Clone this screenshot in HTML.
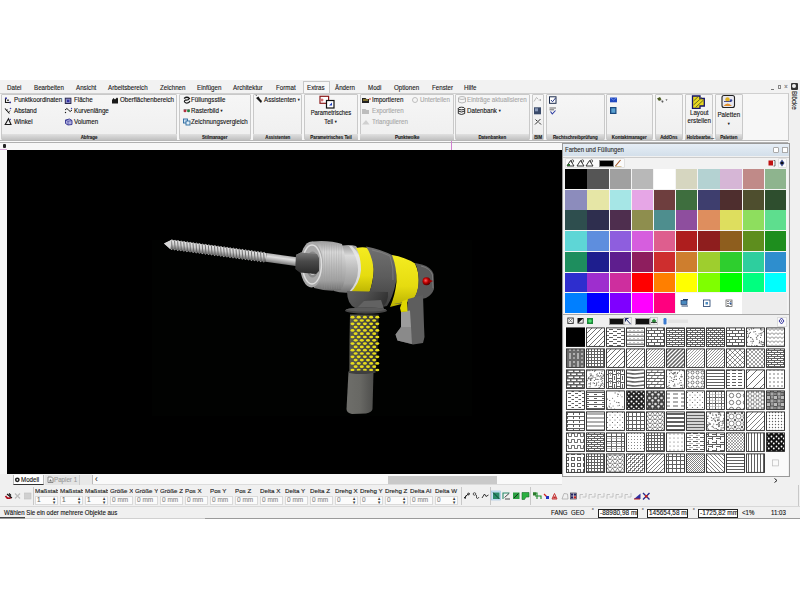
<!DOCTYPE html><html><head><meta charset="utf-8"><style>
html,body{margin:0;padding:0;width:800px;height:600px;overflow:hidden;background:#fff;}
#root{position:relative;width:800px;height:600px;overflow:hidden;font-family:"Liberation Sans",sans-serif;}
.t{position:absolute;white-space:nowrap;line-height:1.2;-webkit-text-stroke:0.12px currentColor;}
.b{position:absolute;box-sizing:border-box;}
svg{position:absolute;}
</style></head><body><div id="root">
<div class="b" style="left:0px;top:80px;width:800px;height:439px;background:#f0f0f0;"></div>
<div class="b" style="left:0px;top:80px;width:800px;height:13px;background:#f2f2f2;"></div>
<div class="b" style="left:302.5px;top:81px;width:27px;height:12.5px;background:#f7f7f7;border:1px solid #c8c8c8;border-bottom:none;"></div>
<div class="t" style="left:6.75px;top:83.80px;font-size:7.01px;transform:scaleX(0.885);transform-origin:0 0;color:#1a1a1a;font-weight:normal;">Datei</div>
<div class="t" style="left:33.75px;top:83.80px;font-size:7.01px;transform:scaleX(0.885);transform-origin:0 0;color:#1a1a1a;font-weight:normal;">Bearbeiten</div>
<div class="t" style="left:75.75px;top:83.80px;font-size:7.01px;transform:scaleX(0.885);transform-origin:0 0;color:#1a1a1a;font-weight:normal;">Ansicht</div>
<div class="t" style="left:108px;top:83.80px;font-size:7.01px;transform:scaleX(0.885);transform-origin:0 0;color:#1a1a1a;font-weight:normal;">Arbeitsbereich</div>
<div class="t" style="left:160px;top:83.80px;font-size:7.01px;transform:scaleX(0.885);transform-origin:0 0;color:#1a1a1a;font-weight:normal;">Zeichnen</div>
<div class="t" style="left:197px;top:83.80px;font-size:7.01px;transform:scaleX(0.885);transform-origin:0 0;color:#1a1a1a;font-weight:normal;">Einfügen</div>
<div class="t" style="left:233px;top:83.80px;font-size:7.01px;transform:scaleX(0.885);transform-origin:0 0;color:#1a1a1a;font-weight:normal;">Architektur</div>
<div class="t" style="left:276px;top:83.80px;font-size:7.01px;transform:scaleX(0.885);transform-origin:0 0;color:#1a1a1a;font-weight:normal;">Format</div>
<div class="t" style="left:307px;top:83.80px;font-size:7.01px;transform:scaleX(0.885);transform-origin:0 0;color:#1a1a1a;font-weight:normal;">Extras</div>
<div class="t" style="left:335px;top:83.80px;font-size:7.01px;transform:scaleX(0.885);transform-origin:0 0;color:#1a1a1a;font-weight:normal;">Ändern</div>
<div class="t" style="left:367.5px;top:83.80px;font-size:7.01px;transform:scaleX(0.885);transform-origin:0 0;color:#1a1a1a;font-weight:normal;">Modi</div>
<div class="t" style="left:394px;top:83.80px;font-size:7.01px;transform:scaleX(0.885);transform-origin:0 0;color:#1a1a1a;font-weight:normal;">Optionen</div>
<div class="t" style="left:432px;top:83.80px;font-size:7.01px;transform:scaleX(0.885);transform-origin:0 0;color:#1a1a1a;font-weight:normal;">Fenster</div>
<div class="t" style="left:464px;top:83.80px;font-size:7.01px;transform:scaleX(0.885);transform-origin:0 0;color:#1a1a1a;font-weight:normal;">Hilfe</div>
<div class="b" style="left:770.5px;top:88.5px;width:3px;height:0.8px;background:#777;"></div>
<div class="b" style="left:777.5px;top:85px;width:3.5px;height:3.5px;border:0.8px solid #888;"></div>
<div class="t" style="left:784.3px;top:82.59px;font-size:7.34px;transform:scaleX(0.885);transform-origin:0 0;color:#777;font-weight:normal;">×</div>
<div class="b" style="left:0px;top:92.5px;width:788.5px;height:48.5px;background:#f7f7f7;border-top:1px solid #d0d0d0;border-bottom:1px solid #b8b8b8;border-right:1px solid #c8c8c8;"></div>
<div class="b" style="left:1px;top:94px;width:176px;height:46px;background:linear-gradient(#f6f6f6,#efefef);border:1px solid #c9c9c9;border-radius:1px;"></div>
<div class="b" style="left:1.5px;top:133.5px;width:175px;height:6.3px;background:linear-gradient(#e0e0e0,#c0c0c0);"></div>
<div class="t" style="left:1px;width:176px;text-align:center;top:134.1px;font-size:5.0px;transform:scaleX(0.885);transform-origin:50% 0;color:#1a1a1a;font-weight:bold;">Abfrage</div>
<div class="b" style="left:179px;top:94px;width:71.5px;height:46px;background:linear-gradient(#f6f6f6,#efefef);border:1px solid #c9c9c9;border-radius:1px;"></div>
<div class="b" style="left:179.5px;top:133.5px;width:70.5px;height:6.3px;background:linear-gradient(#e0e0e0,#c0c0c0);"></div>
<div class="t" style="left:179px;width:71.5px;text-align:center;top:134.1px;font-size:5.0px;transform:scaleX(0.885);transform-origin:50% 0;color:#1a1a1a;font-weight:bold;">Stilmanager</div>
<div class="b" style="left:252.5px;top:94px;width:49.5px;height:46px;background:linear-gradient(#f6f6f6,#efefef);border:1px solid #c9c9c9;border-radius:1px;"></div>
<div class="b" style="left:253.0px;top:133.5px;width:48.5px;height:6.3px;background:linear-gradient(#e0e0e0,#c0c0c0);"></div>
<div class="t" style="left:252.5px;width:49.5px;text-align:center;top:134.1px;font-size:5.0px;transform:scaleX(0.885);transform-origin:50% 0;color:#1a1a1a;font-weight:bold;">Assistenten</div>
<div class="b" style="left:304px;top:94px;width:54px;height:46px;background:linear-gradient(#f6f6f6,#efefef);border:1px solid #c9c9c9;border-radius:1px;"></div>
<div class="b" style="left:304.5px;top:133.5px;width:53px;height:6.3px;background:linear-gradient(#e0e0e0,#c0c0c0);"></div>
<div class="t" style="left:304px;width:54px;text-align:center;top:134.1px;font-size:5.0px;transform:scaleX(0.885);transform-origin:50% 0;color:#1a1a1a;font-weight:bold;">Parametrisches Teil</div>
<div class="b" style="left:359.5px;top:94px;width:94.5px;height:46px;background:linear-gradient(#f6f6f6,#efefef);border:1px solid #c9c9c9;border-radius:1px;"></div>
<div class="b" style="left:360.0px;top:133.5px;width:93.5px;height:6.3px;background:linear-gradient(#e0e0e0,#c0c0c0);"></div>
<div class="t" style="left:359.5px;width:94.5px;text-align:center;top:134.1px;font-size:5.0px;transform:scaleX(0.885);transform-origin:50% 0;color:#1a1a1a;font-weight:bold;">Punktwolke</div>
<div class="b" style="left:455px;top:94px;width:74.60000000000002px;height:46px;background:linear-gradient(#f6f6f6,#efefef);border:1px solid #c9c9c9;border-radius:1px;"></div>
<div class="b" style="left:455.5px;top:133.5px;width:73.60000000000002px;height:6.3px;background:linear-gradient(#e0e0e0,#c0c0c0);"></div>
<div class="t" style="left:455px;width:74.60000000000002px;text-align:center;top:134.1px;font-size:5.0px;transform:scaleX(0.885);transform-origin:50% 0;color:#1a1a1a;font-weight:bold;">Datenbanken</div>
<div class="b" style="left:531.6px;top:94px;width:12.399999999999977px;height:46px;background:linear-gradient(#f6f6f6,#efefef);border:1px solid #c9c9c9;border-radius:1px;"></div>
<div class="b" style="left:532.1px;top:133.5px;width:11.399999999999977px;height:6.3px;background:linear-gradient(#e0e0e0,#c0c0c0);"></div>
<div class="t" style="left:531.6px;width:12.399999999999977px;text-align:center;top:134.1px;font-size:5.0px;transform:scaleX(0.885);transform-origin:50% 0;color:#1a1a1a;font-weight:bold;">BIM</div>
<div class="b" style="left:546px;top:94px;width:58.5px;height:46px;background:linear-gradient(#f6f6f6,#efefef);border:1px solid #c9c9c9;border-radius:1px;"></div>
<div class="b" style="left:546.5px;top:133.5px;width:57.5px;height:6.3px;background:linear-gradient(#e0e0e0,#c0c0c0);"></div>
<div class="t" style="left:546px;width:58.5px;text-align:center;top:134.1px;font-size:5.0px;transform:scaleX(0.885);transform-origin:50% 0;color:#1a1a1a;font-weight:bold;">Rechtschreibprüfung</div>
<div class="b" style="left:606px;top:94px;width:46.5px;height:46px;background:linear-gradient(#f6f6f6,#efefef);border:1px solid #c9c9c9;border-radius:1px;"></div>
<div class="b" style="left:606.5px;top:133.5px;width:45.5px;height:6.3px;background:linear-gradient(#e0e0e0,#c0c0c0);"></div>
<div class="t" style="left:606px;width:46.5px;text-align:center;top:134.1px;font-size:5.0px;transform:scaleX(0.885);transform-origin:50% 0;color:#1a1a1a;font-weight:bold;">Kontaktmanager</div>
<div class="b" style="left:655px;top:94px;width:27.5px;height:46px;background:linear-gradient(#f6f6f6,#efefef);border:1px solid #c9c9c9;border-radius:1px;"></div>
<div class="b" style="left:655.5px;top:133.5px;width:26.5px;height:6.3px;background:linear-gradient(#e0e0e0,#c0c0c0);"></div>
<div class="t" style="left:655px;width:27.5px;text-align:center;top:134.1px;font-size:5.0px;transform:scaleX(0.885);transform-origin:50% 0;color:#1a1a1a;font-weight:bold;">AddOns</div>
<div class="b" style="left:684.5px;top:94px;width:28.5px;height:46px;background:linear-gradient(#f6f6f6,#efefef);border:1px solid #c9c9c9;border-radius:1px;"></div>
<div class="b" style="left:685.0px;top:133.5px;width:27.5px;height:6.3px;background:linear-gradient(#e0e0e0,#c0c0c0);"></div>
<div class="t" style="left:684.5px;width:28.5px;text-align:center;top:134.1px;font-size:5.0px;transform:scaleX(0.885);transform-origin:50% 0;color:#1a1a1a;font-weight:bold;">Holzbearbe...</div>
<div class="b" style="left:715px;top:94px;width:27.5px;height:46px;background:linear-gradient(#f6f6f6,#efefef);border:1px solid #c9c9c9;border-radius:1px;"></div>
<div class="b" style="left:715.5px;top:133.5px;width:26.5px;height:6.3px;background:linear-gradient(#e0e0e0,#c0c0c0);"></div>
<div class="t" style="left:715px;width:27.5px;text-align:center;top:134.1px;font-size:5.0px;transform:scaleX(0.885);transform-origin:50% 0;color:#1a1a1a;font-weight:bold;">Paletten</div>
<div class="b" style="left:0px;top:141px;width:788px;height:1.5px;background:#fafafa;"></div>
<div class="b" style="left:0px;top:142px;width:788px;height:1px;background:#b0b0b0;"></div>
<div class="t" style="left:13.7px;top:95.80px;font-size:7.01px;transform:scaleX(0.885);transform-origin:0 0;color:#111;font-weight:normal;">Punktkoordinaten</div>
<div class="t" style="left:13.7px;top:106.80px;font-size:7.01px;transform:scaleX(0.885);transform-origin:0 0;color:#111;font-weight:normal;">Abstand</div>
<div class="t" style="left:13.7px;top:118.30px;font-size:7.01px;transform:scaleX(0.885);transform-origin:0 0;color:#111;font-weight:normal;">Winkel</div>
<div class="t" style="left:73.75px;top:95.80px;font-size:7.01px;transform:scaleX(0.885);transform-origin:0 0;color:#111;font-weight:normal;">Fläche</div>
<div class="t" style="left:73.75px;top:106.80px;font-size:7.01px;transform:scaleX(0.885);transform-origin:0 0;color:#111;font-weight:normal;">Kurvenlänge</div>
<div class="t" style="left:73.75px;top:118.30px;font-size:7.01px;transform:scaleX(0.885);transform-origin:0 0;color:#111;font-weight:normal;">Volumen</div>
<div class="t" style="left:120px;top:95.80px;font-size:7.01px;transform:scaleX(0.885);transform-origin:0 0;color:#111;font-weight:normal;">Oberflächenbereich</div>
<div class="t" style="left:191px;top:95.80px;font-size:7.01px;transform:scaleX(0.885);transform-origin:0 0;color:#111;font-weight:normal;">Füllungsstile</div>
<div class="t" style="left:191px;top:106.60px;font-size:7.01px;transform:scaleX(0.885);transform-origin:0 0;color:#111;font-weight:normal;">Rasterbild<span style='font-size:4px;vertical-align:1px'> ▼</span></div>
<div class="t" style="left:191px;top:118.10px;font-size:7.01px;transform:scaleX(0.885);transform-origin:0 0;color:#111;font-weight:normal;">Zeichnungsvergleich</div>
<div class="t" style="left:264px;top:95.80px;font-size:7.01px;transform:scaleX(0.885);transform-origin:0 0;color:#111;font-weight:normal;">Assistenten<span style='font-size:4px;vertical-align:1px'> ▼</span></div>
<div class="t" style="left:371.6px;top:95.80px;font-size:7.01px;transform:scaleX(0.885);transform-origin:0 0;color:#111;font-weight:normal;">Importieren</div>
<div class="t" style="left:467px;top:106.80px;font-size:7.01px;transform:scaleX(0.885);transform-origin:0 0;color:#111;font-weight:normal;">Datenbank<span style='font-size:4px;vertical-align:1px'> ▼</span></div>
<div class="t" style="left:419.6px;top:95.80px;font-size:7.01px;transform:scaleX(0.885);transform-origin:0 0;color:#a8a8a8;font-weight:normal;">Unterteilen</div>
<div class="t" style="left:371.6px;top:106.80px;font-size:7.01px;transform:scaleX(0.885);transform-origin:0 0;color:#a8a8a8;font-weight:normal;">Exportieren</div>
<div class="t" style="left:371.6px;top:118.30px;font-size:7.01px;transform:scaleX(0.885);transform-origin:0 0;color:#a8a8a8;font-weight:normal;">Triangulieren</div>
<div class="t" style="left:467px;top:95.80px;font-size:7.01px;transform:scaleX(0.885);transform-origin:0 0;color:#a8a8a8;font-weight:normal;">Einträge aktualisieren</div>
<div class="t" style="left:304px;width:54px;text-align:center;top:109px;font-size:6.6px;transform:scaleX(0.885);transform-origin:50% 0;color:#111;font-weight:normal;line-height:8.6px;">Parametrisches<br>Teil<span style='font-size:4px;vertical-align:1px'> ▼</span></div>
<div class="t" style="left:684.5px;width:28.5px;text-align:center;top:108.5px;font-size:7px;transform:scaleX(0.885);transform-origin:50% 0;color:#111;font-weight:normal;line-height:8.5px;">Layout<br>erstellen</div>
<div class="t" style="left:715px;width:27.5px;text-align:center;top:110.5px;font-size:7px;transform:scaleX(0.885);transform-origin:50% 0;color:#111;font-weight:normal;line-height:8.5px;">Paletten<br><span style='font-size:4px;'>▼</span></div>
<div class="b" style="left:0px;top:143px;width:562px;height:7px;background:#f7f7f7;"></div>
<div class="b" style="left:0px;top:143px;width:7px;height:331px;background:#f7f7f7;"></div>
<div class="b" style="left:451px;top:141px;width:1px;height:9px;background:#d080d0;"></div>
<div class="b" style="left:0px;top:149px;width:7px;height:1.2px;background:#d8a8d8;"></div>
<div class="b" style="left:2.5px;top:144px;width:3px;height:4px;background:#222;border-radius:1px;"></div>
<div class="b" style="left:7px;top:149.5px;width:555px;height:324px;background:#000;"></div>
<div class="b" style="left:152px;top:240px;width:320px;height:176px;background:#010201;"></div>
<svg style="left:0;top:0" width="800" height="600" viewBox="0 0 800 600">
<defs>
<linearGradient id="gScrew" x1="0" y1="0" x2="0" y2="1"><stop offset="0" stop-color="#e8e8e8"/><stop offset="0.45" stop-color="#cfcfcf"/><stop offset="1" stop-color="#6a6a6a"/></linearGradient>
<linearGradient id="gShaft" x1="0" y1="0" x2="0" y2="1"><stop offset="0" stop-color="#b0b0b0"/><stop offset="0.35" stop-color="#e0e0e0"/><stop offset="1" stop-color="#7a7a7a"/></linearGradient>
<linearGradient id="gHex" x1="0" y1="0" x2="0" y2="1"><stop offset="0" stop-color="#7a7a7a"/><stop offset="0.4" stop-color="#4a4a4a"/><stop offset="1" stop-color="#2a2a2a"/></linearGradient>
<linearGradient id="gChuck" x1="0" y1="0" x2="0" y2="1"><stop offset="0" stop-color="#9a9a9a"/><stop offset="0.22" stop-color="#dadada"/><stop offset="0.5" stop-color="#bcbcbc"/><stop offset="0.8" stop-color="#a0a0a0"/><stop offset="1" stop-color="#6e6e6e"/></linearGradient>
<linearGradient id="gChuck2" x1="0" y1="0" x2="1" y2="0"><stop offset="0" stop-color="#9a9a9a"/><stop offset="0.5" stop-color="#d8d8d8"/><stop offset="1" stop-color="#a0a0a0"/></linearGradient>
<linearGradient id="gYel" x1="0" y1="0" x2="0" y2="1"><stop offset="0" stop-color="#f4ec20"/><stop offset="0.6" stop-color="#e6dc10"/><stop offset="1" stop-color="#b8b000"/></linearGradient>
<linearGradient id="gGray" x1="0" y1="0" x2="0" y2="1"><stop offset="0" stop-color="#707070"/><stop offset="0.5" stop-color="#5c5c5c"/><stop offset="1" stop-color="#3e3e3e"/></linearGradient>
<linearGradient id="gGrip" x1="0" y1="0" x2="1" y2="0"><stop offset="0" stop-color="#6e6e6a"/><stop offset="0.5" stop-color="#686864"/><stop offset="1" stop-color="#4e4e4c"/></linearGradient>
<linearGradient id="gKnurl" x1="0" y1="0" x2="1" y2="0"><stop offset="0" stop-color="#5a5a50"/><stop offset="0.6" stop-color="#454540"/><stop offset="1" stop-color="#2a2a28"/></linearGradient>
<radialGradient id="gRed" cx="0.4" cy="0.4" r="0.6"><stop offset="0" stop-color="#ff6060"/><stop offset="0.5" stop-color="#c00000"/><stop offset="1" stop-color="#500000"/></radialGradient>
<linearGradient id="gBelly" x1="0" y1="0" x2="1" y2="0.3"><stop offset="0" stop-color="#5e5e5e"/><stop offset="0.5" stop-color="#4e4e4e"/><stop offset="1" stop-color="#333"/></linearGradient>
</defs>
<g transform="translate(164,243.5) rotate(7.746)">
<path d="M0 0 L7 -4.4 L103 -4.2 L103 4.4 L7 4.6 Z" fill="url(#gScrew)"/>
<path d="M6.00 -4.2 L7.40 -5.3 L8.80 -4.2 M7.00 4.4 L8.40 5.5 L9.40 4.4 M9.10 -4.2 L10.50 -5.3 L11.90 -4.2 M10.10 4.4 L11.50 5.5 L12.50 4.4 M12.20 -4.2 L13.60 -5.3 L15.00 -4.2 M13.20 4.4 L14.60 5.5 L15.60 4.4 M15.30 -4.2 L16.70 -5.3 L18.10 -4.2 M16.30 4.4 L17.70 5.5 L18.70 4.4 M18.40 -4.2 L19.80 -5.3 L21.20 -4.2 M19.40 4.4 L20.80 5.5 L21.80 4.4 M21.50 -4.2 L22.90 -5.3 L24.30 -4.2 M22.50 4.4 L23.90 5.5 L24.90 4.4 M24.60 -4.2 L26.00 -5.3 L27.40 -4.2 M25.60 4.4 L27.00 5.5 L28.00 4.4 M27.70 -4.2 L29.10 -5.3 L30.50 -4.2 M28.70 4.4 L30.10 5.5 L31.10 4.4 M30.80 -4.2 L32.20 -5.3 L33.60 -4.2 M31.80 4.4 L33.20 5.5 L34.20 4.4 M33.90 -4.2 L35.30 -5.3 L36.70 -4.2 M34.90 4.4 L36.30 5.5 L37.30 4.4 M37.00 -4.2 L38.40 -5.3 L39.80 -4.2 M38.00 4.4 L39.40 5.5 L40.40 4.4 M40.10 -4.2 L41.50 -5.3 L42.90 -4.2 M41.10 4.4 L42.50 5.5 L43.50 4.4 M43.20 -4.2 L44.60 -5.3 L46.00 -4.2 M44.20 4.4 L45.60 5.5 L46.60 4.4 M46.30 -4.2 L47.70 -5.3 L49.10 -4.2 M47.30 4.4 L48.70 5.5 L49.70 4.4 M49.40 -4.2 L50.80 -5.3 L52.20 -4.2 M50.40 4.4 L51.80 5.5 L52.80 4.4 M52.50 -4.2 L53.90 -5.3 L55.30 -4.2 M53.50 4.4 L54.90 5.5 L55.90 4.4 M55.60 -4.2 L57.00 -5.3 L58.40 -4.2 M56.60 4.4 L58.00 5.5 L59.00 4.4 M58.70 -4.2 L60.10 -5.3 L61.50 -4.2 M59.70 4.4 L61.10 5.5 L62.10 4.4 M61.80 -4.2 L63.20 -5.3 L64.60 -4.2 M62.80 4.4 L64.20 5.5 L65.20 4.4 M64.90 -4.2 L66.30 -5.3 L67.70 -4.2 M65.90 4.4 L67.30 5.5 L68.30 4.4 M68.00 -4.2 L69.40 -5.3 L70.80 -4.2 M69.00 4.4 L70.40 5.5 L71.40 4.4 M71.10 -4.2 L72.50 -5.3 L73.90 -4.2 M72.10 4.4 L73.50 5.5 L74.50 4.4 M74.20 -4.2 L75.60 -5.3 L77.00 -4.2 M75.20 4.4 L76.60 5.5 L77.60 4.4 M77.30 -4.2 L78.70 -5.3 L80.10 -4.2 M78.30 4.4 L79.70 5.5 L80.70 4.4 M80.40 -4.2 L81.80 -5.3 L83.20 -4.2 M81.40 4.4 L82.80 5.5 L83.80 4.4 M83.50 -4.2 L84.90 -5.3 L86.30 -4.2 M84.50 4.4 L85.90 5.5 L86.90 4.4 M86.60 -4.2 L88.00 -5.3 L89.40 -4.2 M87.60 4.4 L89.00 5.5 L90.00 4.4 M89.70 -4.2 L91.10 -5.3 L92.50 -4.2 M90.70 4.4 L92.10 5.5 L93.10 4.4 M92.80 -4.2 L94.20 -5.3 L95.60 -4.2 M93.80 4.4 L95.20 5.5 L96.20 4.4 M95.90 -4.2 L97.30 -5.3 L98.70 -4.2 M96.90 4.4 L98.30 5.5 L99.30 4.4 M99.00 -4.2 L100.40 -5.3 L101.80 -4.2 M100.00 4.4 L101.40 5.5 L102.40 4.4" fill="#bdbdbd"/>
<path d="M7.00 -4.0 L8.80 4.2 M10.10 -4.0 L11.90 4.2 M13.20 -4.0 L15.00 4.2 M16.30 -4.0 L18.10 4.2 M19.40 -4.0 L21.20 4.2 M22.50 -4.0 L24.30 4.2 M25.60 -4.0 L27.40 4.2 M28.70 -4.0 L30.50 4.2 M31.80 -4.0 L33.60 4.2 M34.90 -4.0 L36.70 4.2 M38.00 -4.0 L39.80 4.2 M41.10 -4.0 L42.90 4.2 M44.20 -4.0 L46.00 4.2 M47.30 -4.0 L49.10 4.2 M50.40 -4.0 L52.20 4.2 M53.50 -4.0 L55.30 4.2 M56.60 -4.0 L58.40 4.2 M59.70 -4.0 L61.50 4.2 M62.80 -4.0 L64.60 4.2 M65.90 -4.0 L67.70 4.2 M69.00 -4.0 L70.80 4.2 M72.10 -4.0 L73.90 4.2 M75.20 -4.0 L77.00 4.2 M78.30 -4.0 L80.10 4.2 M81.40 -4.0 L83.20 4.2 M84.50 -4.0 L86.30 4.2 M87.60 -4.0 L89.40 4.2 M90.70 -4.0 L92.50 4.2 M93.80 -4.0 L95.60 4.2 M96.90 -4.0 L98.70 4.2 M100.00 -4.0 L101.80 4.2" stroke="#606060" stroke-width="1.0" fill="none" opacity="0.85"/>
<path d="M0 0 L7 -4.8 L7 4.8 Z" fill="#d8d8d8"/>
<rect x="103" y="-4.3" width="36" height="8.8" fill="url(#gShaft)"/>
</g>
<path d="M296 255 L301 252.5 L318 254 L320 258 L320 271 L317 274 L300 272.5 L295.5 269 Z" fill="url(#gHex)"/>
<path d="M296 255 L301 252.5 L318 254 L316 258 L299 257 Z" fill="#8a8a8a" opacity="0.7"/>
<path d="M335 247 Q348 243.5 356 246 Q365 258 364.5 270 Q364 284 356 292 Q342 294 334 291 Z" fill="url(#gChuck)"/>
<path d="M352 246 Q362 256 362.5 270 Q362 284 353 292 L349 292 Q358 282 358 270 Q358 257 349 246 Z" fill="#e8e8e8" opacity="0.8"/>
<path d="M312 241.5 Q330 240 342 244 Q346 258 346 268 Q346 281 341 290 Q328 292 314 288 Z" fill="url(#gChuck)"/>
<path d="M322.0 244 L322.0 289 M324.4 244 L324.4 289 M326.8 244 L326.8 289 M329.2 244 L329.2 289 M331.6 244 L331.6 289 M334.0 244 L334.0 289 M336.4 244 L336.4 289 M338.8 244 L338.8 289 M341.2 244 L341.2 289" stroke="#9a9a9a" stroke-width="0.5" opacity="0.6"/>
<ellipse cx="311.5" cy="264.5" rx="11.5" ry="23" fill="#a8a8a8"/>
<ellipse cx="312" cy="264.5" rx="9.5" ry="19.5" fill="none" stroke="#dedede" stroke-width="1.5"/>
<ellipse cx="312.5" cy="264.5" rx="6.5" ry="13" fill="#8a8a8a"/>
<ellipse cx="312.5" cy="264.5" rx="5" ry="10" fill="none" stroke="#d8d8d8" stroke-width="1"/>
<path d="M296 255 L301 252.5 L317 254 L319 258 L319 271 L316 274 L300 272.5 L295.5 269 Z" fill="url(#gHex)"/>
<path d="M356 248 Q363 246.5 368 248 Q375 260 373.5 274 Q372 286 369 293.5 Q358 295 349 294 Q360 284 361 270 Q361 256 356 248 Z" fill="url(#gYel)"/>
<path d="M366 246.5 Q380 249 393 255.5 Q398 268 396 282 Q393 297 387 306 Q375 309 366 305 Q358 300 352 296 L369 293.5 Q374 280 373.5 268 Q372 255 366 246.5 Z" fill="url(#gGray)"/>
<path d="M372 250 Q382 252 390 256 Q394 268 393 280" fill="none" stroke="#8a8a8a" stroke-width="1" opacity="0.6"/>
<path d="M347 291 L388 292 Q389 303 381 308 L356 308.5 Q347 305 347 291 Z" fill="url(#gBelly)"/>
<path d="M392 255 Q405 257 415 263.5 Q420 274 418.5 286 Q417 296 412 300.5 Q400 305 390 307 Q395 296 396.5 282 Q397 268 392 255 Z" fill="url(#gYel)"/>
<path d="M415 263 L422 264.5 Q431 267 433.5 274 L434 289 Q432 295 426 298 L408 302 Q398 304 394 304 L412 300.5 Q418 294 418.5 283 Q419 270 415 263 Z" fill="#5a5a5a"/>
<path d="M421 266 Q430 268 432.5 275 L433 288" fill="none" stroke="#7a7a7a" stroke-width="1"/>
<circle cx="426.5" cy="281.3" r="4" fill="url(#gRed)"/>
<path d="M429 279.5 L433 281 L429 283 Z" fill="#a00000"/>
<path d="M408 299 L423 295 L424 326 L424.5 337 L423 343 L413 344.5 L397.5 340.5 L395.5 334.5 L401 327 L401 312 L407 311 Z" fill="#5e5e5e"/>
<path d="M401 312 L410 310.5 L411 327 L401 327 Z" fill="#9c9c9c"/>
<path d="M401 327 L411 327 L412 344 L397.5 340.5 L395.5 334.5 Z" fill="#8a8a8a"/>
<path d="M400 308 L402.5 301 L407 299.5 L407.5 311.5 L401 312 Z" fill="#e0d800"/>
<path d="M356 309 L364 301 L381 300 L384 309 Z" fill="#626262"/>
<ellipse cx="366" cy="310.5" rx="21" ry="3.2" fill="#444"/>
<ellipse cx="366" cy="309.6" rx="20" ry="2" fill="#5a5a5a"/>
<path d="M350 314.5 L378.8 314.5 L378 342 L375.5 373 L349.3 373 L349.5 340 Z" fill="url(#gKnurl)"/>
<g fill="#e6dc1c"><ellipse cx="352.5" cy="317.2" rx="2.0" ry="1.35"/><ellipse cx="358.7" cy="317.2" rx="2.0" ry="1.35"/><ellipse cx="364.9" cy="317.2" rx="2.0" ry="1.35"/><ellipse cx="371.1" cy="317.2" rx="2.0" ry="1.35"/><ellipse cx="377.3" cy="317.2" rx="2.0" ry="1.35"/><ellipse cx="355.6" cy="320.5" rx="2.0" ry="1.35"/><ellipse cx="361.8" cy="320.5" rx="2.0" ry="1.35"/><ellipse cx="368.0" cy="320.5" rx="2.0" ry="1.35"/><ellipse cx="374.2" cy="320.5" rx="2.0" ry="1.35"/><ellipse cx="352.5" cy="323.8" rx="2.0" ry="1.35"/><ellipse cx="358.7" cy="323.8" rx="2.0" ry="1.35"/><ellipse cx="364.9" cy="323.8" rx="2.0" ry="1.35"/><ellipse cx="371.1" cy="323.8" rx="2.0" ry="1.35"/><ellipse cx="377.3" cy="323.8" rx="2.0" ry="1.35"/><ellipse cx="355.6" cy="327.1" rx="2.0" ry="1.35"/><ellipse cx="361.8" cy="327.1" rx="2.0" ry="1.35"/><ellipse cx="368.0" cy="327.1" rx="2.0" ry="1.35"/><ellipse cx="374.2" cy="327.1" rx="2.0" ry="1.35"/><ellipse cx="352.5" cy="330.4" rx="2.0" ry="1.35"/><ellipse cx="358.7" cy="330.4" rx="2.0" ry="1.35"/><ellipse cx="364.9" cy="330.4" rx="2.0" ry="1.35"/><ellipse cx="371.1" cy="330.4" rx="2.0" ry="1.35"/><ellipse cx="377.3" cy="330.4" rx="2.0" ry="1.35"/><ellipse cx="355.6" cy="333.7" rx="2.0" ry="1.35"/><ellipse cx="361.8" cy="333.7" rx="2.0" ry="1.35"/><ellipse cx="368.0" cy="333.7" rx="2.0" ry="1.35"/><ellipse cx="374.2" cy="333.7" rx="2.0" ry="1.35"/><ellipse cx="352.5" cy="337.0" rx="2.0" ry="1.35"/><ellipse cx="358.7" cy="337.0" rx="2.0" ry="1.35"/><ellipse cx="364.9" cy="337.0" rx="2.0" ry="1.35"/><ellipse cx="371.1" cy="337.0" rx="2.0" ry="1.35"/><ellipse cx="377.3" cy="337.0" rx="2.0" ry="1.35"/><ellipse cx="355.6" cy="340.3" rx="2.0" ry="1.35"/><ellipse cx="361.8" cy="340.3" rx="2.0" ry="1.35"/><ellipse cx="368.0" cy="340.3" rx="2.0" ry="1.35"/><ellipse cx="374.2" cy="340.3" rx="2.0" ry="1.35"/><ellipse cx="352.5" cy="343.6" rx="2.0" ry="1.35"/><ellipse cx="358.7" cy="343.6" rx="2.0" ry="1.35"/><ellipse cx="364.9" cy="343.6" rx="2.0" ry="1.35"/><ellipse cx="371.1" cy="343.6" rx="2.0" ry="1.35"/><ellipse cx="377.3" cy="343.6" rx="2.0" ry="1.35"/><ellipse cx="355.6" cy="346.9" rx="2.0" ry="1.35"/><ellipse cx="361.8" cy="346.9" rx="2.0" ry="1.35"/><ellipse cx="368.0" cy="346.9" rx="2.0" ry="1.35"/><ellipse cx="374.2" cy="346.9" rx="2.0" ry="1.35"/><ellipse cx="352.5" cy="350.2" rx="2.0" ry="1.35"/><ellipse cx="358.7" cy="350.2" rx="2.0" ry="1.35"/><ellipse cx="364.9" cy="350.2" rx="2.0" ry="1.35"/><ellipse cx="371.1" cy="350.2" rx="2.0" ry="1.35"/><ellipse cx="377.3" cy="350.2" rx="2.0" ry="1.35"/><ellipse cx="355.6" cy="353.5" rx="2.0" ry="1.35"/><ellipse cx="361.8" cy="353.5" rx="2.0" ry="1.35"/><ellipse cx="368.0" cy="353.5" rx="2.0" ry="1.35"/><ellipse cx="374.2" cy="353.5" rx="2.0" ry="1.35"/><ellipse cx="352.5" cy="356.8" rx="2.0" ry="1.35"/><ellipse cx="358.7" cy="356.8" rx="2.0" ry="1.35"/><ellipse cx="364.9" cy="356.8" rx="2.0" ry="1.35"/><ellipse cx="371.1" cy="356.8" rx="2.0" ry="1.35"/><ellipse cx="377.3" cy="356.8" rx="2.0" ry="1.35"/><ellipse cx="355.6" cy="360.1" rx="2.0" ry="1.35"/><ellipse cx="361.8" cy="360.1" rx="2.0" ry="1.35"/><ellipse cx="368.0" cy="360.1" rx="2.0" ry="1.35"/><ellipse cx="374.2" cy="360.1" rx="2.0" ry="1.35"/><ellipse cx="352.5" cy="363.4" rx="2.0" ry="1.35"/><ellipse cx="358.7" cy="363.4" rx="2.0" ry="1.35"/><ellipse cx="364.9" cy="363.4" rx="2.0" ry="1.35"/><ellipse cx="371.1" cy="363.4" rx="2.0" ry="1.35"/><ellipse cx="377.3" cy="363.4" rx="2.0" ry="1.35"/><ellipse cx="355.6" cy="366.7" rx="2.0" ry="1.35"/><ellipse cx="361.8" cy="366.7" rx="2.0" ry="1.35"/><ellipse cx="368.0" cy="366.7" rx="2.0" ry="1.35"/><ellipse cx="374.2" cy="366.7" rx="2.0" ry="1.35"/><ellipse cx="352.5" cy="370.0" rx="2.0" ry="1.35"/><ellipse cx="358.7" cy="370.0" rx="2.0" ry="1.35"/><ellipse cx="364.9" cy="370.0" rx="2.0" ry="1.35"/><ellipse cx="371.1" cy="370.0" rx="2.0" ry="1.35"/><ellipse cx="377.3" cy="370.0" rx="2.0" ry="1.35"/></g>
<path d="M348.5 371.5 L373.5 371.5 L372.5 409 Q372 412 366 413.5 L352 414 Q346.5 413 346.5 409 Z" fill="url(#gGrip)"/>
<ellipse cx="361" cy="372.3" rx="12.5" ry="1.8" fill="#3e3e3e"/>
</svg>
<div class="b" style="left:789px;top:80px;width:11px;height:439px;background:#f0f0f0;"></div>
<div class="b" style="left:790.5px;top:82.5px;width:7px;height:7px;background:#333;border-radius:1px;"></div>
<div class="b" style="left:792px;top:84px;width:4px;height:4px;background:#eee;border-radius:2px;"></div>
<div class="t" style="left:790px;top:90.5px;font-size:7px;line-height:8px;color:#1a1a1a;writing-mode:vertical-rl;transform:scaleY(0.885);transform-origin:0 0;">Blöcke</div>
<div class="b" style="left:562px;top:143px;width:227.5px;height:333.5px;background:#f0f0f0;border:1px solid #9a9a9a;"></div>
<div class="b" style="left:563px;top:143.8px;width:225.5px;height:12.7px;background:linear-gradient(#e6eef6,#d3dfea);"></div>
<div class="t" style="left:565.3px;top:146px;font-size:6.8px;transform:scaleX(0.885);transform-origin:0 0;color:#2a2a2a;">Farben und Füllungen</div>
<div class="b" style="left:773px;top:147px;width:6px;height:6px;background:#fff;border:1px solid #aaa;border-radius:1px;"></div>
<div class="b" style="left:781.5px;top:147px;width:6px;height:6px;background:#fff;border:1px solid #aaa;"></div>
<div class="b" style="left:563px;top:156.5px;width:225.5px;height:12px;background:#f2f2f2;border-top:1px solid #ccc;"></div>
<div class="b" style="left:565px;top:158px;width:60px;height:10px;background:#fafafa;border:1px solid #e0e0e0;border-radius:1px;"></div>
<div class="b" style="left:777.5px;top:158px;width:9.5px;height:10px;background:#fafafa;border:1px solid #e0e0e0;border-radius:1px;"></div>
<div class="b" style="left:599px;top:159.8px;width:15px;height:7px;background:#000;border:1px solid #888;"></div>
<div class="b" style="left:564px;top:168.5px;width:224px;height:146px;background:#f4f4f4;"></div>
<div class="b" style="left:565.3px;top:169.0px;width:21.4px;height:19.9px;background:#000000;"></div>
<div class="b" style="left:587.4499999999999px;top:169.0px;width:21.4px;height:19.9px;background:#555555;"></div>
<div class="b" style="left:609.5999999999999px;top:169.0px;width:21.4px;height:19.9px;background:#a0a0a0;"></div>
<div class="b" style="left:631.75px;top:169.0px;width:21.4px;height:19.9px;background:#b8b8b8;"></div>
<div class="b" style="left:653.9px;top:169.0px;width:21.4px;height:19.9px;background:#ffffff;"></div>
<div class="b" style="left:676.05px;top:169.0px;width:21.4px;height:19.9px;background:#d6d6c0;"></div>
<div class="b" style="left:698.1999999999999px;top:169.0px;width:21.4px;height:19.9px;background:#b4d2d2;"></div>
<div class="b" style="left:720.3499999999999px;top:169.0px;width:21.4px;height:19.9px;background:#d6b6d6;"></div>
<div class="b" style="left:742.5px;top:169.0px;width:21.4px;height:19.9px;background:#c08a88;"></div>
<div class="b" style="left:764.65px;top:169.0px;width:21.4px;height:19.9px;background:#8eb48e;"></div>
<div class="b" style="left:565.3px;top:189.72px;width:21.4px;height:19.9px;background:#8c8cbc;"></div>
<div class="b" style="left:587.4499999999999px;top:189.72px;width:21.4px;height:19.9px;background:#e6e6a6;"></div>
<div class="b" style="left:609.5999999999999px;top:189.72px;width:21.4px;height:19.9px;background:#a6e6e6;"></div>
<div class="b" style="left:631.75px;top:189.72px;width:21.4px;height:19.9px;background:#e6a6e6;"></div>
<div class="b" style="left:653.9px;top:189.72px;width:21.4px;height:19.9px;background:#6e3e3e;"></div>
<div class="b" style="left:676.05px;top:189.72px;width:21.4px;height:19.9px;background:#3e6e3e;"></div>
<div class="b" style="left:698.1999999999999px;top:189.72px;width:21.4px;height:19.9px;background:#3e3e6e;"></div>
<div class="b" style="left:720.3499999999999px;top:189.72px;width:21.4px;height:19.9px;background:#4e2e2e;"></div>
<div class="b" style="left:742.5px;top:189.72px;width:21.4px;height:19.9px;background:#4e4e2e;"></div>
<div class="b" style="left:764.65px;top:189.72px;width:21.4px;height:19.9px;background:#2e4e2e;"></div>
<div class="b" style="left:565.3px;top:210.44px;width:21.4px;height:19.9px;background:#2e4e4e;"></div>
<div class="b" style="left:587.4499999999999px;top:210.44px;width:21.4px;height:19.9px;background:#2e2e4e;"></div>
<div class="b" style="left:609.5999999999999px;top:210.44px;width:21.4px;height:19.9px;background:#4e2e4e;"></div>
<div class="b" style="left:631.75px;top:210.44px;width:21.4px;height:19.9px;background:#8e8e4e;"></div>
<div class="b" style="left:653.9px;top:210.44px;width:21.4px;height:19.9px;background:#4e8e8e;"></div>
<div class="b" style="left:676.05px;top:210.44px;width:21.4px;height:19.9px;background:#8e4e9e;"></div>
<div class="b" style="left:698.1999999999999px;top:210.44px;width:21.4px;height:19.9px;background:#de8e5e;"></div>
<div class="b" style="left:720.3499999999999px;top:210.44px;width:21.4px;height:19.9px;background:#dede5e;"></div>
<div class="b" style="left:742.5px;top:210.44px;width:21.4px;height:19.9px;background:#8ede5e;"></div>
<div class="b" style="left:764.65px;top:210.44px;width:21.4px;height:19.9px;background:#5ede8e;"></div>
<div class="b" style="left:565.3px;top:231.16px;width:21.4px;height:19.9px;background:#5ed6d6;"></div>
<div class="b" style="left:587.4499999999999px;top:231.16px;width:21.4px;height:19.9px;background:#5e8ede;"></div>
<div class="b" style="left:609.5999999999999px;top:231.16px;width:21.4px;height:19.9px;background:#8e5ede;"></div>
<div class="b" style="left:631.75px;top:231.16px;width:21.4px;height:19.9px;background:#d65ede;"></div>
<div class="b" style="left:653.9px;top:231.16px;width:21.4px;height:19.9px;background:#de5e8e;"></div>
<div class="b" style="left:676.05px;top:231.16px;width:21.4px;height:19.9px;background:#ae1e1e;"></div>
<div class="b" style="left:698.1999999999999px;top:231.16px;width:21.4px;height:19.9px;background:#8e1e1e;"></div>
<div class="b" style="left:720.3499999999999px;top:231.16px;width:21.4px;height:19.9px;background:#8e5e1e;"></div>
<div class="b" style="left:742.5px;top:231.16px;width:21.4px;height:19.9px;background:#5e8e1e;"></div>
<div class="b" style="left:764.65px;top:231.16px;width:21.4px;height:19.9px;background:#1e8e1e;"></div>
<div class="b" style="left:565.3px;top:251.88px;width:21.4px;height:19.9px;background:#1e8e5e;"></div>
<div class="b" style="left:587.4499999999999px;top:251.88px;width:21.4px;height:19.9px;background:#1e1e8e;"></div>
<div class="b" style="left:609.5999999999999px;top:251.88px;width:21.4px;height:19.9px;background:#5e1e8e;"></div>
<div class="b" style="left:631.75px;top:251.88px;width:21.4px;height:19.9px;background:#8e1e5e;"></div>
<div class="b" style="left:653.9px;top:251.88px;width:21.4px;height:19.9px;background:#ce2e2e;"></div>
<div class="b" style="left:676.05px;top:251.88px;width:21.4px;height:19.9px;background:#ce7e2e;"></div>
<div class="b" style="left:698.1999999999999px;top:251.88px;width:21.4px;height:19.9px;background:#9ece2e;"></div>
<div class="b" style="left:720.3499999999999px;top:251.88px;width:21.4px;height:19.9px;background:#2ece2e;"></div>
<div class="b" style="left:742.5px;top:251.88px;width:21.4px;height:19.9px;background:#2ece9e;"></div>
<div class="b" style="left:764.65px;top:251.88px;width:21.4px;height:19.9px;background:#2e8ece;"></div>
<div class="b" style="left:565.3px;top:272.6px;width:21.4px;height:19.9px;background:#2e2ece;"></div>
<div class="b" style="left:587.4499999999999px;top:272.6px;width:21.4px;height:19.9px;background:#9e2ece;"></div>
<div class="b" style="left:609.5999999999999px;top:272.6px;width:21.4px;height:19.9px;background:#ce2e9e;"></div>
<div class="b" style="left:631.75px;top:272.6px;width:21.4px;height:19.9px;background:#ff0000;"></div>
<div class="b" style="left:653.9px;top:272.6px;width:21.4px;height:19.9px;background:#ff7f00;"></div>
<div class="b" style="left:676.05px;top:272.6px;width:21.4px;height:19.9px;background:#ffff00;"></div>
<div class="b" style="left:698.1999999999999px;top:272.6px;width:21.4px;height:19.9px;background:#7fff00;"></div>
<div class="b" style="left:720.3499999999999px;top:272.6px;width:21.4px;height:19.9px;background:#00ff00;"></div>
<div class="b" style="left:742.5px;top:272.6px;width:21.4px;height:19.9px;background:#00ff7f;"></div>
<div class="b" style="left:764.65px;top:272.6px;width:21.4px;height:19.9px;background:#00ffff;"></div>
<div class="b" style="left:565.3px;top:293.32px;width:21.4px;height:19.9px;background:#007fff;"></div>
<div class="b" style="left:587.4499999999999px;top:293.32px;width:21.4px;height:19.9px;background:#0000ff;"></div>
<div class="b" style="left:609.5999999999999px;top:293.32px;width:21.4px;height:19.9px;background:#7f00ff;"></div>
<div class="b" style="left:631.75px;top:293.32px;width:21.4px;height:19.9px;background:#ff00ff;"></div>
<div class="b" style="left:653.9px;top:293.32px;width:21.4px;height:19.9px;background:#ff007f;"></div>
<div class="b" style="left:675.55px;top:292.82px;width:22.15px;height:20.9px;background:#ffffff;"></div>
<div class="b" style="left:697.6999999999999px;top:292.82px;width:22.15px;height:20.9px;background:#ffffff;"></div>
<div class="b" style="left:719.8499999999999px;top:292.82px;width:22.15px;height:20.9px;background:#ffffff;"></div>
<div class="b" style="left:742.0px;top:292.82px;width:22.15px;height:20.9px;background:#ededed;"></div>
<div class="b" style="left:764.15px;top:292.82px;width:22.549999999999997px;height:20.9px;background:#ededed;"></div>
<div class="b" style="left:563px;top:314.3px;width:225.5px;height:1.2px;background:#a8a8a8;"></div>
<div class="b" style="left:563px;top:315.5px;width:225.5px;height:11px;background:#f0f0f0;"></div>
<div class="b" style="left:609px;top:317.5px;width:15px;height:7.5px;background:#111;border:1px solid #999;"></div>
<div class="b" style="left:635px;top:317.5px;width:15px;height:7.5px;background:#111;border:1px solid #999;"></div>
<div class="b" style="left:776.5px;top:316.5px;width:10.5px;height:10px;background:#fafafa;border:1px solid #dcdcdc;"></div>
<div class="b" style="left:564px;top:326.5px;width:224px;height:149px;background:#fafafa;"></div><svg style="left:0;top:0" width="800" height="600" viewBox="0 0 800 600"><defs><pattern id="dW" patternUnits="userSpaceOnUse" width="5" height="5"><rect width="5" height="5" fill="#fff"/><g opacity="0.62"><path d="M0 5 L5 0 M-1 1 L1 -1 M4 6 L6 4" fill="none" stroke="#000" stroke-width="0.9"/></g></pattern><pattern id="dM" patternUnits="userSpaceOnUse" width="4" height="4"><rect width="4" height="4" fill="#fff"/><g opacity="0.62"><path d="M0 4 L4 0 M-1 1 L1 -1 M3 5 L5 3" fill="none" stroke="#000" stroke-width="0.8"/></g></pattern><pattern id="dF" patternUnits="userSpaceOnUse" width="3" height="3"><rect width="3" height="3" fill="#fff"/><g opacity="0.62"><path d="M0 3 L3 0 M-1 1 L1 -1 M2 4 L4 2" fill="none" stroke="#000" stroke-width="0.7"/></g></pattern><pattern id="dT" patternUnits="userSpaceOnUse" width="4" height="4"><rect width="4" height="4" fill="#fff"/><g opacity="0.62"><path d="M0 4 L4 0 M-1 1 L1 -1 M3 5 L5 3" fill="none" stroke="#000" stroke-width="1.5"/></g></pattern><pattern id="dVF" patternUnits="userSpaceOnUse" width="3" height="3"><rect width="3" height="3" fill="#fff"/><g opacity="0.62"><path d="M0 3 L3 0 M-1 1 L1 -1 M2 4 L4 2" fill="none" stroke="#000" stroke-width="0.6"/></g></pattern><pattern id="dVF2" patternUnits="userSpaceOnUse" width="3" height="3"><rect width="3" height="3" fill="#fff"/><g opacity="0.62"><path d="M0 3 L3 0 M-1 1 L1 -1 M2 4 L4 2" fill="none" stroke="#000" stroke-width="0.7"/></g></pattern><pattern id="dS" patternUnits="userSpaceOnUse" width="7" height="7"><rect width="7" height="7" fill="#fff"/><g opacity="0.62"><path d="M0 7 L7 0 M-1 1 L1 -1 M6 8 L8 6" fill="none" stroke="#000" stroke-width="0.9"/></g></pattern><pattern id="dW2" patternUnits="userSpaceOnUse" width="5" height="5"><rect width="5" height="5" fill="#fff"/><g opacity="0.62"><path d="M0 5 L5 0 M-1 1 L1 -1 M4 6 L6 4" fill="none" stroke="#000" stroke-width="0.8"/></g></pattern><pattern id="dBack" patternUnits="userSpaceOnUse" width="4" height="4"><rect width="4" height="4" fill="#fff"/><g opacity="0.62"><path d="M0 0 L4 4 M-1 3 L1 5 M3 -1 L5 1" fill="none" stroke="#000" stroke-width="0.8"/></g></pattern><pattern id="dL" patternUnits="userSpaceOnUse" width="4" height="4"><rect width="4" height="4" fill="#fff"/><g opacity="0.62"><path d="M0 4 L4 0 M-1 1 L1 -1 M3 5 L5 3" fill="none" stroke="#000" stroke-width="0.8"/></g></pattern><pattern id="hF" patternUnits="userSpaceOnUse" width="4" height="3"><rect width="4" height="3" fill="#fff"/><g opacity="0.62"><rect x="0" y="1.0" width="4" height="1" fill="#000"/></g></pattern><pattern id="hS" patternUnits="userSpaceOnUse" width="4" height="4"><rect width="4" height="4" fill="#fff"/><g opacity="0.62"><rect x="0" y="1.5" width="4" height="1" fill="#000"/></g></pattern><pattern id="hT" patternUnits="userSpaceOnUse" width="4" height="4"><rect width="4" height="4" fill="#fff"/><g opacity="0.62"><rect x="0" y="1.0" width="4" height="2" fill="#000"/></g></pattern><pattern id="hT2" patternUnits="userSpaceOnUse" width="4" height="3"><rect width="4" height="3" fill="#fff"/><g opacity="0.62"><rect x="0" y="0.75" width="4" height="1.5" fill="#000"/></g></pattern><pattern id="hL" patternUnits="userSpaceOnUse" width="4" height="3"><rect width="4" height="3" fill="#fff"/><g opacity="0.62"><rect x="0" y="1.0" width="4" height="1" fill="#000"/></g></pattern><pattern id="vL" patternUnits="userSpaceOnUse" width="3" height="4"><rect width="3" height="4" fill="#fff"/><g opacity="0.62"><rect x="1.0" y="0" width="1" height="4" fill="#000"/></g></pattern><pattern id="vL2" patternUnits="userSpaceOnUse" width="3" height="4"><rect width="3" height="4" fill="#fff"/><g opacity="0.62"><rect x="1.0" y="0" width="1" height="4" fill="#000"/></g></pattern><pattern id="hDash" patternUnits="userSpaceOnUse" width="8" height="4"><rect width="8" height="4" fill="#fff"/><g opacity="0.62"><rect x="1" y="1" width="4" height="1" fill="#000"/><rect x="5" y="3" width="3" height="1" fill="#000"/><rect x="0" y="3" width="1" height="1" fill="#000"/></g></pattern><pattern id="hDashed" patternUnits="userSpaceOnUse" width="6" height="3"><rect width="6" height="3" fill="#fff"/><g opacity="0.62"><rect x="0" y="1" width="4" height="1" fill="#000"/></g></pattern><pattern id="hDashed2" patternUnits="userSpaceOnUse" width="7" height="4"><rect width="7" height="4" fill="#fff"/><g opacity="0.62"><rect x="0" y="1" width="5" height="1" fill="#000"/><rect x="3" y="3" width="4" height="1" fill="#888"/></g></pattern><pattern id="dashes" patternUnits="userSpaceOnUse" width="7" height="4"><rect width="7" height="4" fill="#fff"/><g opacity="0.62"><rect x="1" y="1" width="3" height="1" fill="#000"/><rect x="4.5" y="3" width="2.5" height="1" fill="#000"/></g></pattern><pattern id="hlD" patternUnits="userSpaceOnUse" width="8" height="4"><rect width="8" height="4" fill="#fff"/><g opacity="0.62"><rect x="0" y="0" width="8" height="1" fill="#000"/><rect x="2" y="2" width="3" height="1" fill="#000"/></g></pattern><pattern id="hTick" patternUnits="userSpaceOnUse" width="6" height="4"><rect width="6" height="4" fill="#fff"/><g opacity="0.62"><rect x="0" y="0" width="6" height="1" fill="#000"/><rect x="3" y="1" width="1" height="2" fill="#000"/></g></pattern><pattern id="hArrow" patternUnits="userSpaceOnUse" width="8" height="4"><rect width="8" height="4" fill="#fff"/><g opacity="0.62"><rect x="1" y="1.5" width="5" height="1" fill="#000"/></g></pattern><pattern id="br1" patternUnits="userSpaceOnUse" width="6" height="6"><rect width="6" height="6" fill="#fff"/><g opacity="0.62"><rect x="0" y="0" width="6" height="1" fill="#000"/><rect x="0" y="3" width="6" height="1" fill="#000"/><rect x="0" y="0" width="1" height="3" fill="#000"/><rect x="3" y="3" width="1" height="3" fill="#000"/></g></pattern><pattern id="br2" patternUnits="userSpaceOnUse" width="6" height="4"><rect width="6" height="4" fill="#fff"/><g opacity="0.62"><rect x="0" y="0" width="6" height="1" fill="#000"/><rect x="0" y="2" width="6" height="1" fill="#000"/><rect x="0" y="0" width="1" height="2" fill="#000"/><rect x="3" y="2" width="1" height="2" fill="#000"/></g></pattern><pattern id="br3" patternUnits="userSpaceOnUse" width="5" height="4"><rect width="5" height="4" fill="#fff"/><g opacity="0.62"><rect x="0" y="0" width="5" height="1" fill="#000"/><rect x="0" y="2" width="5" height="1" fill="#000"/><rect x="0" y="0" width="1" height="2" fill="#000"/><rect x="2" y="2" width="1" height="2" fill="#000"/></g></pattern><pattern id="brD" patternUnits="userSpaceOnUse" width="4" height="4"><rect width="4" height="4" fill="#fff"/><g opacity="0.62"><rect x="0" y="0" width="4" height="1" fill="#000"/><rect x="0" y="2" width="4" height="1" fill="#000"/><rect x="0" y="0" width="1" height="2" fill="#000"/><rect x="2" y="2" width="1" height="2" fill="#000"/></g></pattern><pattern id="brL" patternUnits="userSpaceOnUse" width="6" height="6"><rect width="6" height="6" fill="#fff"/><g opacity="0.62"><rect x="0" y="0" width="6" height="1" fill="#000"/><rect x="0" y="3" width="6" height="1" fill="#000"/><rect x="0" y="0" width="1" height="3" fill="#000"/><rect x="3" y="3" width="1" height="3" fill="#000"/></g></pattern><pattern id="br4" patternUnits="userSpaceOnUse" width="6" height="4"><rect width="6" height="4" fill="#fff"/><g opacity="0.62"><rect x="0" y="0" width="6" height="1" fill="#000"/><rect x="0" y="2" width="6" height="1" fill="#000"/><rect x="0" y="0" width="1" height="2" fill="#000"/><rect x="3" y="2" width="1" height="2" fill="#000"/></g></pattern><pattern id="br5" patternUnits="userSpaceOnUse" width="6" height="4"><rect width="6" height="4" fill="#fff"/><g opacity="0.62"><rect x="0" y="0" width="6" height="1" fill="#000"/><rect x="0" y="2" width="6" height="1" fill="#000"/><rect x="0" y="0" width="1" height="2" fill="#000"/><rect x="3" y="2" width="1" height="2" fill="#000"/></g></pattern><pattern id="brV" patternUnits="userSpaceOnUse" width="6" height="6"><rect width="6" height="6" fill="#fff"/><g opacity="0.62"><rect x="0" y="0" width="6" height="1.5" fill="#000"/><rect x="0" y="3" width="6" height="1.5" fill="#000"/><rect x="0" y="0" width="1.5" height="3" fill="#000"/><rect x="3" y="3" width="1.5" height="3" fill="#000"/></g></pattern><pattern id="slBrick" patternUnits="userSpaceOnUse" width="6" height="6"><rect width="6" height="6" fill="#fff"/><g opacity="0.62"><rect x="0" y="0" width="6" height="1" fill="#000"/><rect x="0" y="3" width="6" height="1" fill="#000"/><path d="M1.5 0 L0.5 3 M4.5 3 L3.5 6" fill="none" stroke="#000" stroke-width="0.9"/></g></pattern><pattern id="scales" patternUnits="userSpaceOnUse" width="4" height="4"><rect width="4" height="4" fill="#fff"/><g opacity="0.62"><path d="M0.5 4 Q2 1 3.5 4" fill="none" stroke="#000" stroke-width="0.8"/><rect x="0" y="0" width="4" height="0.8" fill="#000"/></g></pattern><pattern id="stone" patternUnits="userSpaceOnUse" width="20" height="20"><rect width="20" height="20" fill="#fff"/><g opacity="0.62"><circle cx="6.5" cy="3.0" r="0.6" fill="#000"/><circle cx="13.0" cy="1.4" r="0.6" fill="#000"/><circle cx="10.7" cy="7.3" r="0.6" fill="#000"/><circle cx="1.2" cy="10.1" r="0.6" fill="#000"/><circle cx="0.7" cy="8.7" r="0.6" fill="#000"/><circle cx="1.4" cy="1.8" r="0.6" fill="#000"/><circle cx="8.5" cy="16.5" r="0.6" fill="#000"/><circle cx="2.5" cy="4.5" r="0.6" fill="#000"/><circle cx="12.5" cy="19.0" r="0.6" fill="#000"/><circle cx="11.5" cy="7.9" r="0.6" fill="#000"/><circle cx="19.5" cy="0.9" r="0.6" fill="#000"/><circle cx="17.2" cy="5.8" r="0.6" fill="#000"/><circle cx="2.9" cy="2.4" r="0.6" fill="#000"/><circle cx="6.2" cy="16.3" r="0.6" fill="#000"/><circle cx="3.6" cy="11.6" r="0.6" fill="#000"/><circle cx="12.8" cy="7.4" r="0.6" fill="#000"/><circle cx="11.0" cy="1.3" r="0.6" fill="#000"/><circle cx="1.2" cy="4.1" r="0.6" fill="#000"/><circle cx="13.6" cy="8.6" r="0.6" fill="#000"/><circle cx="6.3" cy="11.7" r="0.6" fill="#000"/><circle cx="9.1" cy="6.0" r="0.6" fill="#000"/><circle cx="15.9" cy="14.0" r="0.6" fill="#000"/><circle cx="4.9" cy="11.5" r="0.6" fill="#000"/><circle cx="10.5" cy="17.5" r="0.6" fill="#000"/><circle cx="14.6" cy="5.8" r="0.6" fill="#000"/><circle cx="19.6" cy="2.4" r="0.6" fill="#000"/><circle cx="8.4" cy="15.1" r="0.6" fill="#000"/><circle cx="3.0" cy="9.8" r="0.6" fill="#000"/><circle cx="0.8" cy="13.4" r="0.6" fill="#000"/><circle cx="15.3" cy="11.5" r="0.6" fill="#000"/><circle cx="17.5" cy="6.3" r="0.6" fill="#000"/><circle cx="13.9" cy="11.9" r="0.6" fill="#000"/><circle cx="11.6" cy="9.1" r="0.6" fill="#000"/><circle cx="16.8" cy="18.9" r="0.6" fill="#000"/><circle cx="9.5" cy="13.3" r="0.6" fill="#000"/><circle cx="1.2" cy="14.0" r="0.6" fill="#000"/><circle cx="12.9" cy="19.9" r="0.6" fill="#000"/><circle cx="16.4" cy="5.7" r="0.6" fill="#000"/><circle cx="7.7" cy="13.4" r="0.6" fill="#000"/><circle cx="0.5" cy="9.2" r="0.6" fill="#000"/><circle cx="3.4" cy="2.3" r="0.6" fill="#000"/><circle cx="1.2" cy="15.4" r="0.6" fill="#000"/><circle cx="2.6" cy="5.0" r="0.6" fill="#000"/><circle cx="7.8" cy="17.4" r="0.6" fill="#000"/><circle cx="1.6" cy="9.0" r="0.6" fill="#000"/><circle cx="11.0" cy="17.7" r="0.6" fill="#000"/><circle cx="16.4" cy="17.3" r="0.6" fill="#000"/><circle cx="5.6" cy="8.3" r="0.6" fill="#000"/><circle cx="7.2" cy="17.7" r="0.6" fill="#000"/><circle cx="19.2" cy="3.0" r="0.6" fill="#000"/><circle cx="3.5" cy="4.6" r="0.6" fill="#000"/><circle cx="4.7" cy="9.7" r="0.6" fill="#000"/><circle cx="11.8" cy="5.3" r="0.6" fill="#000"/><circle cx="0.1" cy="8.4" r="0.6" fill="#000"/><circle cx="7.4" cy="11.3" r="0.6" fill="#000"/><circle cx="19.1" cy="13.8" r="0.6" fill="#000"/><circle cx="10.3" cy="12.4" r="0.6" fill="#000"/><circle cx="13.5" cy="1.1" r="0.6" fill="#000"/><circle cx="18.0" cy="15.6" r="0.6" fill="#000"/><circle cx="17.5" cy="16.0" r="0.6" fill="#000"/><circle cx="7.8" cy="8.0" r="0.6" fill="#000"/><circle cx="2.1" cy="12.7" r="0.6" fill="#000"/><circle cx="1.2" cy="1.3" r="0.6" fill="#000"/><circle cx="4.2" cy="3.2" r="0.6" fill="#000"/><circle cx="6.8" cy="1.1" r="0.6" fill="#000"/><circle cx="0.0" cy="3.0" r="0.6" fill="#000"/><circle cx="2.0" cy="7.3" r="0.6" fill="#000"/><circle cx="0.5" cy="17.5" r="0.6" fill="#000"/><circle cx="12.3" cy="3.0" r="0.6" fill="#000"/><circle cx="5.0" cy="6.9" r="0.6" fill="#000"/><circle cx="7.3" cy="2.5" r="0.6" fill="#000"/><circle cx="17.0" cy="19.9" r="0.6" fill="#000"/><circle cx="9.3" cy="9.7" r="0.6" fill="#000"/><circle cx="1.7" cy="2.0" r="0.6" fill="#000"/><circle cx="6.9" cy="5.3" r="0.6" fill="#000"/></g></pattern><pattern id="stip" patternUnits="userSpaceOnUse" width="20" height="20"><rect width="20" height="20" fill="#fff"/><g opacity="0.62"><circle cx="16.6" cy="3.2" r="0.55" fill="#000"/><circle cx="0.5" cy="19.0" r="0.55" fill="#000"/><circle cx="10.6" cy="2.9" r="0.55" fill="#000"/><circle cx="10.9" cy="0.5" r="0.55" fill="#000"/><circle cx="10.6" cy="19.6" r="0.55" fill="#000"/><circle cx="17.3" cy="13.9" r="0.55" fill="#000"/><circle cx="5.2" cy="7.3" r="0.55" fill="#000"/><circle cx="3.3" cy="15.4" r="0.55" fill="#000"/><circle cx="10.7" cy="15.6" r="0.55" fill="#000"/><circle cx="6.6" cy="4.5" r="0.55" fill="#000"/><circle cx="16.2" cy="19.7" r="0.55" fill="#000"/><circle cx="17.1" cy="16.1" r="0.55" fill="#000"/><circle cx="16.4" cy="14.8" r="0.55" fill="#000"/><circle cx="4.5" cy="10.4" r="0.55" fill="#000"/><circle cx="7.1" cy="0.6" r="0.55" fill="#000"/><circle cx="0.6" cy="5.6" r="0.55" fill="#000"/><circle cx="5.2" cy="13.9" r="0.55" fill="#000"/><circle cx="19.1" cy="8.9" r="0.55" fill="#000"/><circle cx="18.7" cy="19.8" r="0.55" fill="#000"/><circle cx="19.1" cy="7.3" r="0.55" fill="#000"/><circle cx="4.4" cy="4.5" r="0.55" fill="#000"/><circle cx="3.9" cy="4.1" r="0.55" fill="#000"/><circle cx="12.5" cy="18.0" r="0.55" fill="#000"/><circle cx="16.8" cy="9.6" r="0.55" fill="#000"/><circle cx="13.1" cy="16.0" r="0.55" fill="#000"/><circle cx="1.7" cy="13.2" r="0.55" fill="#000"/><circle cx="18.2" cy="15.6" r="0.55" fill="#000"/><circle cx="15.0" cy="9.6" r="0.55" fill="#000"/><circle cx="3.6" cy="15.8" r="0.55" fill="#000"/><circle cx="6.7" cy="16.0" r="0.55" fill="#000"/><circle cx="19.4" cy="7.9" r="0.55" fill="#000"/><circle cx="8.0" cy="18.9" r="0.55" fill="#000"/><circle cx="14.5" cy="3.4" r="0.55" fill="#000"/><circle cx="2.5" cy="3.0" r="0.55" fill="#000"/><circle cx="18.1" cy="16.1" r="0.55" fill="#000"/><circle cx="2.9" cy="16.5" r="0.55" fill="#000"/><circle cx="19.6" cy="13.1" r="0.55" fill="#000"/><circle cx="7.0" cy="11.0" r="0.55" fill="#000"/><circle cx="2.6" cy="0.3" r="0.55" fill="#000"/><circle cx="19.4" cy="13.0" r="0.55" fill="#000"/><circle cx="10.5" cy="18.7" r="0.55" fill="#000"/><circle cx="8.7" cy="17.4" r="0.55" fill="#000"/><circle cx="16.5" cy="4.2" r="0.55" fill="#000"/><circle cx="5.0" cy="5.9" r="0.55" fill="#000"/><circle cx="4.8" cy="11.7" r="0.55" fill="#000"/><circle cx="5.2" cy="8.4" r="0.55" fill="#000"/><circle cx="2.6" cy="18.2" r="0.55" fill="#000"/><circle cx="7.1" cy="9.2" r="0.55" fill="#000"/><circle cx="11.7" cy="18.1" r="0.55" fill="#000"/><circle cx="8.4" cy="18.4" r="0.55" fill="#000"/><circle cx="10.0" cy="10.6" r="0.55" fill="#000"/><circle cx="10.5" cy="0.4" r="0.55" fill="#000"/><circle cx="8.8" cy="3.7" r="0.55" fill="#000"/><circle cx="0.1" cy="16.0" r="0.55" fill="#000"/><circle cx="3.4" cy="9.5" r="0.55" fill="#000"/><circle cx="14.5" cy="11.1" r="0.55" fill="#000"/><circle cx="6.5" cy="10.4" r="0.55" fill="#000"/><circle cx="11.1" cy="15.7" r="0.55" fill="#000"/><circle cx="2.1" cy="11.2" r="0.55" fill="#000"/><circle cx="5.0" cy="5.5" r="0.55" fill="#000"/><circle cx="15.4" cy="10.2" r="0.55" fill="#000"/><circle cx="11.2" cy="15.2" r="0.55" fill="#000"/><circle cx="18.2" cy="8.9" r="0.55" fill="#000"/><circle cx="12.3" cy="10.1" r="0.55" fill="#000"/><circle cx="10.2" cy="13.9" r="0.55" fill="#000"/><circle cx="9.0" cy="10.7" r="0.55" fill="#000"/><circle cx="9.6" cy="18.8" r="0.55" fill="#000"/><circle cx="14.0" cy="17.5" r="0.55" fill="#000"/><circle cx="18.8" cy="5.2" r="0.55" fill="#000"/><circle cx="11.2" cy="18.9" r="0.55" fill="#000"/><circle cx="16.8" cy="2.7" r="0.55" fill="#000"/><circle cx="2.4" cy="8.8" r="0.55" fill="#000"/><circle cx="1.5" cy="4.8" r="0.55" fill="#000"/><circle cx="1.5" cy="13.4" r="0.55" fill="#000"/><circle cx="15.7" cy="17.9" r="0.55" fill="#000"/><circle cx="3.1" cy="14.3" r="0.55" fill="#000"/><circle cx="13.2" cy="2.9" r="0.55" fill="#000"/><circle cx="17.7" cy="19.4" r="0.55" fill="#000"/><circle cx="4.4" cy="19.1" r="0.55" fill="#000"/><circle cx="8.0" cy="9.7" r="0.55" fill="#000"/><circle cx="19.8" cy="16.6" r="0.55" fill="#000"/><circle cx="3.2" cy="8.6" r="0.55" fill="#000"/><circle cx="10.3" cy="6.8" r="0.55" fill="#000"/><circle cx="3.9" cy="6.4" r="0.55" fill="#000"/><circle cx="14.4" cy="0.4" r="0.55" fill="#000"/><circle cx="11.1" cy="8.8" r="0.55" fill="#000"/><circle cx="0.4" cy="6.6" r="0.55" fill="#000"/><circle cx="12.5" cy="10.2" r="0.55" fill="#000"/><circle cx="1.3" cy="19.7" r="0.55" fill="#000"/><circle cx="15.8" cy="19.4" r="0.55" fill="#000"/><circle cx="2.1" cy="5.3" r="0.55" fill="#000"/><circle cx="0.8" cy="15.6" r="0.55" fill="#000"/><circle cx="5.4" cy="2.6" r="0.55" fill="#000"/><circle cx="8.4" cy="18.2" r="0.55" fill="#000"/><circle cx="16.4" cy="5.2" r="0.55" fill="#000"/><circle cx="3.0" cy="18.4" r="0.55" fill="#000"/><circle cx="11.4" cy="14.0" r="0.55" fill="#000"/><circle cx="1.8" cy="1.2" r="0.55" fill="#000"/><circle cx="13.8" cy="8.5" r="0.55" fill="#000"/><circle cx="1.4" cy="18.8" r="0.55" fill="#000"/><circle cx="12.7" cy="16.0" r="0.55" fill="#000"/><circle cx="1.7" cy="17.1" r="0.55" fill="#000"/><circle cx="1.3" cy="17.3" r="0.55" fill="#000"/><circle cx="9.1" cy="6.8" r="0.55" fill="#000"/><circle cx="11.1" cy="18.5" r="0.55" fill="#000"/><circle cx="5.4" cy="2.6" r="0.55" fill="#000"/><circle cx="10.5" cy="4.8" r="0.55" fill="#000"/><circle cx="2.2" cy="3.2" r="0.55" fill="#000"/><circle cx="1.0" cy="4.0" r="0.55" fill="#000"/><circle cx="6.2" cy="6.1" r="0.55" fill="#000"/><circle cx="15.2" cy="5.8" r="0.55" fill="#000"/><circle cx="10.0" cy="3.6" r="0.55" fill="#000"/><circle cx="6.9" cy="0.4" r="0.55" fill="#000"/><circle cx="5.0" cy="0.3" r="0.55" fill="#000"/><circle cx="14.7" cy="11.0" r="0.55" fill="#000"/><circle cx="3.8" cy="9.5" r="0.55" fill="#000"/><circle cx="18.7" cy="2.1" r="0.55" fill="#000"/><circle cx="16.4" cy="8.6" r="0.55" fill="#000"/><circle cx="9.9" cy="16.7" r="0.55" fill="#000"/><circle cx="7.9" cy="10.1" r="0.55" fill="#000"/></g></pattern><pattern id="stipS" patternUnits="userSpaceOnUse" width="20" height="20"><rect width="20" height="20" fill="#fff"/><g opacity="0.62"><circle cx="13.8" cy="19.6" r="0.6" fill="#000"/><circle cx="6.9" cy="16.6" r="0.6" fill="#000"/><circle cx="14.1" cy="12.7" r="0.6" fill="#000"/><circle cx="8.1" cy="7.0" r="0.6" fill="#000"/><circle cx="1.1" cy="2.6" r="0.6" fill="#000"/><circle cx="1.4" cy="14.8" r="0.6" fill="#000"/><circle cx="5.1" cy="3.3" r="0.6" fill="#000"/><circle cx="1.7" cy="16.8" r="0.6" fill="#000"/><circle cx="17.4" cy="13.4" r="0.6" fill="#000"/><circle cx="5.6" cy="4.8" r="0.6" fill="#000"/><circle cx="5.9" cy="9.2" r="0.6" fill="#000"/><circle cx="3.2" cy="8.9" r="0.6" fill="#000"/><circle cx="5.3" cy="19.2" r="0.6" fill="#000"/><circle cx="19.5" cy="10.9" r="0.6" fill="#000"/><circle cx="4.9" cy="19.3" r="0.6" fill="#000"/><circle cx="6.2" cy="7.1" r="0.6" fill="#000"/><circle cx="0.0" cy="7.6" r="0.6" fill="#000"/><circle cx="9.5" cy="10.1" r="0.6" fill="#000"/><circle cx="4.0" cy="10.1" r="0.6" fill="#000"/><circle cx="0.1" cy="5.3" r="0.6" fill="#000"/><circle cx="1.8" cy="8.0" r="0.6" fill="#000"/><circle cx="0.8" cy="0.4" r="0.6" fill="#000"/><circle cx="6.1" cy="4.7" r="0.6" fill="#000"/><circle cx="11.7" cy="10.6" r="0.6" fill="#000"/><circle cx="15.0" cy="13.2" r="0.6" fill="#000"/><circle cx="14.3" cy="17.6" r="0.6" fill="#000"/><circle cx="7.8" cy="6.5" r="0.6" fill="#000"/><circle cx="19.7" cy="3.0" r="0.6" fill="#000"/><circle cx="14.5" cy="12.9" r="0.6" fill="#000"/><circle cx="0.9" cy="16.7" r="0.6" fill="#000"/><circle cx="17.8" cy="12.5" r="0.6" fill="#000"/><circle cx="14.7" cy="16.2" r="0.6" fill="#000"/><circle cx="2.8" cy="10.5" r="0.6" fill="#000"/><circle cx="10.1" cy="16.7" r="0.6" fill="#000"/><circle cx="16.1" cy="16.5" r="0.6" fill="#000"/><circle cx="11.7" cy="17.9" r="0.6" fill="#000"/><circle cx="13.7" cy="13.9" r="0.6" fill="#000"/><circle cx="4.6" cy="0.6" r="0.6" fill="#000"/><circle cx="2.7" cy="7.2" r="0.6" fill="#000"/><circle cx="2.1" cy="16.7" r="0.6" fill="#000"/><circle cx="11.2" cy="12.6" r="0.6" fill="#000"/><circle cx="12.5" cy="13.6" r="0.6" fill="#000"/><circle cx="9.8" cy="0.1" r="0.6" fill="#000"/><circle cx="16.0" cy="15.0" r="0.6" fill="#000"/><circle cx="10.1" cy="10.7" r="0.6" fill="#000"/><circle cx="13.2" cy="1.3" r="0.6" fill="#000"/><circle cx="14.7" cy="5.0" r="0.6" fill="#000"/><circle cx="1.5" cy="5.3" r="0.6" fill="#000"/><circle cx="14.6" cy="4.1" r="0.6" fill="#000"/><circle cx="14.8" cy="19.5" r="0.6" fill="#000"/><circle cx="9.9" cy="7.7" r="0.6" fill="#000"/><circle cx="9.6" cy="13.7" r="0.6" fill="#000"/><circle cx="15.3" cy="12.3" r="0.6" fill="#000"/><circle cx="12.9" cy="1.5" r="0.6" fill="#000"/><circle cx="2.9" cy="5.1" r="0.6" fill="#000"/><circle cx="14.9" cy="6.1" r="0.6" fill="#000"/><circle cx="11.4" cy="0.2" r="0.6" fill="#000"/><circle cx="1.2" cy="5.4" r="0.6" fill="#000"/><circle cx="13.4" cy="13.8" r="0.6" fill="#000"/><circle cx="13.5" cy="5.8" r="0.6" fill="#000"/><circle cx="10.3" cy="9.3" r="0.6" fill="#000"/><circle cx="9.3" cy="2.4" r="0.6" fill="#000"/><circle cx="17.9" cy="4.0" r="0.6" fill="#000"/><circle cx="19.6" cy="18.7" r="0.6" fill="#000"/><circle cx="0.4" cy="9.2" r="0.6" fill="#000"/><circle cx="16.4" cy="19.4" r="0.6" fill="#000"/><circle cx="9.0" cy="5.4" r="0.6" fill="#000"/><circle cx="4.2" cy="18.9" r="0.6" fill="#000"/><circle cx="4.2" cy="11.6" r="0.6" fill="#000"/><circle cx="2.8" cy="10.5" r="0.6" fill="#000"/></g></pattern><pattern id="stipS2" patternUnits="userSpaceOnUse" width="20" height="20"><rect width="20" height="20" fill="#fff"/><g opacity="0.62"><circle cx="19.1" cy="2.7" r="0.55" fill="#000"/><circle cx="16.4" cy="10.2" r="0.55" fill="#000"/><circle cx="17.7" cy="14.1" r="0.55" fill="#000"/><circle cx="4.6" cy="18.0" r="0.55" fill="#000"/><circle cx="9.7" cy="0.5" r="0.55" fill="#000"/><circle cx="0.1" cy="9.8" r="0.55" fill="#000"/><circle cx="9.0" cy="6.0" r="0.55" fill="#000"/><circle cx="2.8" cy="6.9" r="0.55" fill="#000"/><circle cx="6.3" cy="16.8" r="0.55" fill="#000"/><circle cx="0.0" cy="15.0" r="0.55" fill="#000"/><circle cx="16.8" cy="2.4" r="0.55" fill="#000"/><circle cx="18.5" cy="14.3" r="0.55" fill="#000"/><circle cx="18.0" cy="5.8" r="0.55" fill="#000"/><circle cx="7.4" cy="7.9" r="0.55" fill="#000"/><circle cx="20.0" cy="11.8" r="0.55" fill="#000"/><circle cx="7.2" cy="8.6" r="0.55" fill="#000"/><circle cx="5.5" cy="1.0" r="0.55" fill="#000"/><circle cx="2.0" cy="16.7" r="0.55" fill="#000"/><circle cx="5.7" cy="18.7" r="0.55" fill="#000"/><circle cx="5.0" cy="5.3" r="0.55" fill="#000"/><circle cx="10.2" cy="3.8" r="0.55" fill="#000"/><circle cx="7.5" cy="19.1" r="0.55" fill="#000"/><circle cx="17.7" cy="16.2" r="0.55" fill="#000"/><circle cx="12.6" cy="18.3" r="0.55" fill="#000"/><circle cx="18.8" cy="11.0" r="0.55" fill="#000"/><circle cx="14.4" cy="1.0" r="0.55" fill="#000"/><circle cx="14.6" cy="9.0" r="0.55" fill="#000"/><circle cx="15.1" cy="12.9" r="0.55" fill="#000"/><circle cx="5.7" cy="1.0" r="0.55" fill="#000"/><circle cx="18.5" cy="2.5" r="0.55" fill="#000"/><circle cx="9.4" cy="6.9" r="0.55" fill="#000"/><circle cx="6.0" cy="14.8" r="0.55" fill="#000"/><circle cx="19.5" cy="5.2" r="0.55" fill="#000"/><circle cx="13.1" cy="6.0" r="0.55" fill="#000"/><circle cx="11.1" cy="7.9" r="0.55" fill="#000"/></g></pattern><pattern id="stipD" patternUnits="userSpaceOnUse" width="20" height="20"><rect width="20" height="20" fill="#fff"/><g opacity="0.62"><circle cx="3.3" cy="3.2" r="0.6" fill="#000"/><circle cx="4.2" cy="18.1" r="0.6" fill="#000"/><circle cx="9.9" cy="4.4" r="0.6" fill="#000"/><circle cx="18.1" cy="19.9" r="0.6" fill="#000"/><circle cx="9.0" cy="2.8" r="0.6" fill="#000"/><circle cx="3.8" cy="1.8" r="0.6" fill="#000"/><circle cx="6.8" cy="1.8" r="0.6" fill="#000"/><circle cx="4.8" cy="5.2" r="0.6" fill="#000"/><circle cx="11.4" cy="17.7" r="0.6" fill="#000"/><circle cx="15.0" cy="8.3" r="0.6" fill="#000"/><circle cx="8.3" cy="10.5" r="0.6" fill="#000"/><circle cx="7.5" cy="6.8" r="0.6" fill="#000"/><circle cx="1.2" cy="5.6" r="0.6" fill="#000"/><circle cx="19.4" cy="2.5" r="0.6" fill="#000"/><circle cx="10.1" cy="12.6" r="0.6" fill="#000"/><circle cx="17.3" cy="4.3" r="0.6" fill="#000"/><circle cx="5.4" cy="5.0" r="0.6" fill="#000"/><circle cx="8.0" cy="8.9" r="0.6" fill="#000"/><circle cx="19.1" cy="17.0" r="0.6" fill="#000"/><circle cx="17.5" cy="0.4" r="0.6" fill="#000"/><circle cx="0.6" cy="14.2" r="0.6" fill="#000"/><circle cx="17.9" cy="9.5" r="0.6" fill="#000"/><circle cx="11.7" cy="0.0" r="0.6" fill="#000"/><circle cx="7.8" cy="18.5" r="0.6" fill="#000"/><circle cx="16.5" cy="17.1" r="0.6" fill="#000"/><circle cx="19.4" cy="5.0" r="0.6" fill="#000"/><circle cx="2.2" cy="3.1" r="0.6" fill="#000"/><circle cx="10.4" cy="13.6" r="0.6" fill="#000"/><circle cx="18.8" cy="14.4" r="0.6" fill="#000"/><circle cx="12.9" cy="15.3" r="0.6" fill="#000"/><circle cx="9.1" cy="11.0" r="0.6" fill="#000"/><circle cx="0.8" cy="15.6" r="0.6" fill="#000"/><circle cx="4.7" cy="18.4" r="0.6" fill="#000"/><circle cx="12.9" cy="6.1" r="0.6" fill="#000"/><circle cx="2.6" cy="5.0" r="0.6" fill="#000"/><circle cx="12.7" cy="14.0" r="0.6" fill="#000"/><circle cx="2.2" cy="1.4" r="0.6" fill="#000"/><circle cx="10.5" cy="11.7" r="0.6" fill="#000"/><circle cx="7.8" cy="4.5" r="0.6" fill="#000"/><circle cx="12.0" cy="0.2" r="0.6" fill="#000"/><circle cx="6.0" cy="9.2" r="0.6" fill="#000"/><circle cx="19.2" cy="12.9" r="0.6" fill="#000"/><circle cx="17.7" cy="9.5" r="0.6" fill="#000"/><circle cx="4.7" cy="4.9" r="0.6" fill="#000"/><circle cx="19.2" cy="14.1" r="0.6" fill="#000"/><circle cx="6.1" cy="0.4" r="0.6" fill="#000"/><circle cx="10.0" cy="13.5" r="0.6" fill="#000"/><circle cx="8.4" cy="5.1" r="0.6" fill="#000"/><circle cx="13.3" cy="18.5" r="0.6" fill="#000"/><circle cx="4.5" cy="0.7" r="0.6" fill="#000"/><circle cx="6.8" cy="8.4" r="0.6" fill="#000"/><circle cx="13.7" cy="4.0" r="0.6" fill="#000"/><circle cx="15.9" cy="14.8" r="0.6" fill="#000"/><circle cx="10.1" cy="4.1" r="0.6" fill="#000"/><circle cx="19.4" cy="6.2" r="0.6" fill="#000"/><circle cx="16.4" cy="4.6" r="0.6" fill="#000"/><circle cx="4.4" cy="15.2" r="0.6" fill="#000"/><circle cx="5.9" cy="19.0" r="0.6" fill="#000"/><circle cx="9.9" cy="3.7" r="0.6" fill="#000"/><circle cx="4.5" cy="8.3" r="0.6" fill="#000"/><circle cx="13.3" cy="19.0" r="0.6" fill="#000"/><circle cx="2.9" cy="7.9" r="0.6" fill="#000"/><circle cx="4.3" cy="19.5" r="0.6" fill="#000"/><circle cx="2.8" cy="1.0" r="0.6" fill="#000"/><circle cx="1.2" cy="7.9" r="0.6" fill="#000"/><circle cx="18.0" cy="17.7" r="0.6" fill="#000"/><circle cx="14.7" cy="20.0" r="0.6" fill="#000"/><circle cx="18.6" cy="6.6" r="0.6" fill="#000"/><circle cx="3.7" cy="18.7" r="0.6" fill="#000"/><circle cx="14.9" cy="0.6" r="0.6" fill="#000"/><circle cx="13.3" cy="7.6" r="0.6" fill="#000"/><circle cx="7.5" cy="6.6" r="0.6" fill="#000"/><circle cx="3.4" cy="0.1" r="0.6" fill="#000"/><circle cx="5.6" cy="7.0" r="0.6" fill="#000"/><circle cx="19.1" cy="2.5" r="0.6" fill="#000"/><circle cx="19.3" cy="4.1" r="0.6" fill="#000"/><circle cx="7.1" cy="16.4" r="0.6" fill="#000"/><circle cx="16.4" cy="8.6" r="0.6" fill="#000"/><circle cx="1.0" cy="9.5" r="0.6" fill="#000"/><circle cx="7.5" cy="18.4" r="0.6" fill="#000"/><circle cx="3.9" cy="7.3" r="0.6" fill="#000"/><circle cx="17.9" cy="0.6" r="0.6" fill="#000"/><circle cx="8.2" cy="16.2" r="0.6" fill="#000"/><circle cx="15.3" cy="0.8" r="0.6" fill="#000"/><circle cx="0.7" cy="1.3" r="0.6" fill="#000"/><circle cx="18.4" cy="5.1" r="0.6" fill="#000"/><circle cx="14.9" cy="18.0" r="0.6" fill="#000"/><circle cx="6.8" cy="5.4" r="0.6" fill="#000"/><circle cx="19.2" cy="12.3" r="0.6" fill="#000"/><circle cx="5.2" cy="14.3" r="0.6" fill="#000"/><circle cx="6.3" cy="5.5" r="0.6" fill="#000"/><circle cx="0.1" cy="15.1" r="0.6" fill="#000"/><circle cx="18.3" cy="12.7" r="0.6" fill="#000"/><circle cx="18.9" cy="0.5" r="0.6" fill="#000"/><circle cx="4.7" cy="9.5" r="0.6" fill="#000"/><circle cx="19.1" cy="19.1" r="0.6" fill="#000"/><circle cx="7.7" cy="5.0" r="0.6" fill="#000"/><circle cx="8.6" cy="9.9" r="0.6" fill="#000"/><circle cx="18.6" cy="3.7" r="0.6" fill="#000"/><circle cx="16.1" cy="14.8" r="0.6" fill="#000"/><circle cx="16.5" cy="15.5" r="0.6" fill="#000"/><circle cx="12.1" cy="6.6" r="0.6" fill="#000"/><circle cx="6.4" cy="7.2" r="0.6" fill="#000"/><circle cx="15.6" cy="1.6" r="0.6" fill="#000"/><circle cx="3.9" cy="15.1" r="0.6" fill="#000"/><circle cx="4.9" cy="1.3" r="0.6" fill="#000"/><circle cx="0.7" cy="11.1" r="0.6" fill="#000"/><circle cx="6.5" cy="19.6" r="0.6" fill="#000"/><circle cx="17.7" cy="19.8" r="0.6" fill="#000"/><circle cx="5.3" cy="1.7" r="0.6" fill="#000"/></g></pattern><pattern id="herr" patternUnits="userSpaceOnUse" width="4" height="4"><rect width="4" height="4" fill="#fff"/><g opacity="0.62"><path d="M0 0.5 L2 2.5 L4 0.5" fill="none" stroke="#000" stroke-width="0.8"/></g></pattern><pattern id="parq" patternUnits="userSpaceOnUse" width="8" height="8"><rect width="8" height="8" fill="#000"/><g opacity="1"><rect x="0" y="0" width="8" height="8" fill="#6a6a6a"/><rect x="1" y="1" width="2" height="6" fill="#b0b0b0"/><rect x="5" y="1" width="2" height="2" fill="#b0b0b0"/><rect x="5" y="5" width="2" height="2" fill="#a0a0a0"/></g></pattern><pattern id="gsq" patternUnits="userSpaceOnUse" width="3" height="3"><rect width="3" height="3" fill="#fff"/><g opacity="0.62"><rect x="0" y="0" width="3" height="1" fill="#000"/><rect x="0" y="0" width="1" height="3" fill="#000"/></g></pattern><pattern id="grid" patternUnits="userSpaceOnUse" width="4" height="4"><rect width="4" height="4" fill="#fff"/><g opacity="0.62"><rect x="0" y="0" width="4" height="1" fill="#000"/><rect x="0" y="0" width="1" height="4" fill="#000"/></g></pattern><pattern id="gFine" patternUnits="userSpaceOnUse" width="3" height="3"><rect width="3" height="3" fill="#fff"/><g opacity="0.62"><rect x="0" y="0" width="3" height="1" fill="#000"/><rect x="0" y="0" width="1" height="3" fill="#000"/></g></pattern><pattern id="gFine2" patternUnits="userSpaceOnUse" width="3" height="3"><rect width="3" height="3" fill="#fff"/><g opacity="0.62"><rect x="0" y="0" width="3" height="1" fill="#000"/><rect x="0" y="0" width="1" height="3" fill="#000"/></g></pattern><pattern id="gMed" patternUnits="userSpaceOnUse" width="4" height="4"><rect width="4" height="4" fill="#fff"/><g opacity="0.62"><rect x="0" y="0" width="4" height="1" fill="#000"/><rect x="0" y="0" width="1" height="4" fill="#000"/></g></pattern><pattern id="plaid" patternUnits="userSpaceOnUse" width="6" height="6"><rect width="6" height="6" fill="#fff"/><g opacity="0.62"><rect x="0" y="1" width="6" height="1" fill="#000"/><rect x="1" y="0" width="1" height="6" fill="#000"/><rect x="0" y="4" width="6" height="0.6" fill="#777"/><rect x="4" y="0" width="0.6" height="6" fill="#777"/></g></pattern><pattern id="plaid2" patternUnits="userSpaceOnUse" width="5" height="5"><rect width="5" height="5" fill="#fff"/><g opacity="0.62"><rect x="0" y="1" width="5" height="1" fill="#000"/><rect x="1" y="0" width="1" height="5" fill="#000"/><rect x="0" y="3" width="5" height="0.6" fill="#666"/></g></pattern><pattern id="xD" patternUnits="userSpaceOnUse" width="5" height="5"><rect width="5" height="5" fill="#fff"/><g opacity="0.62"><path d="M0 5 L5 0 M0 0 L5 5" fill="none" stroke="#000" stroke-width="0.7"/></g></pattern><pattern id="xF" patternUnits="userSpaceOnUse" width="4" height="4"><rect width="4" height="4" fill="#fff"/><g opacity="0.62"><path d="M0 4 L4 0 M0 0 L4 4" fill="none" stroke="#000" stroke-width="0.6"/></g></pattern><pattern id="diaF" patternUnits="userSpaceOnUse" width="3" height="3"><rect width="3" height="3" fill="#fff"/><g opacity="0.62"><path d="M0 3 L3 0 M0 0 L3 3" fill="none" stroke="#000" stroke-width="0.5"/></g></pattern><pattern id="basket" patternUnits="userSpaceOnUse" width="8" height="8"><rect width="8" height="8" fill="#fff"/><g opacity="0.62"><rect x="0" y="2" width="4" height="1" fill="#000"/><rect x="0" y="5" width="4" height="1" fill="#000"/><rect x="4" y="0" width="1" height="8" fill="#000"/><rect x="6" y="0" width="1" height="4" fill="#000"/><rect x="4" y="6" width="4" height="1" fill="#000"/><rect x="0" y="0" width="1" height="8" fill="#000"/><rect x="2" y="4" width="1" height="4" fill="#666"/></g></pattern><pattern id="wood" patternUnits="userSpaceOnUse" width="20" height="4"><rect width="20" height="4" fill="#fff"/><g opacity="0.62"><path d="M0 1.5 Q5 0.5 10 1.5 T20 1.5" fill="none" stroke="#000" stroke-width="1.6"/></g></pattern><pattern id="herrBrick" patternUnits="userSpaceOnUse" width="8" height="8"><rect width="8" height="8" fill="#fff"/><g opacity="0.62"><rect x="0" y="2" width="4" height="1" fill="#000"/><rect x="4" y="0" width="1" height="4" fill="#000"/><rect x="4" y="6" width="4" height="1" fill="#000"/><rect x="0" y="4" width="1" height="4" fill="#000"/><rect x="0" y="4" width="8" height="1" fill="#000"/></g></pattern><pattern id="dotg" patternUnits="userSpaceOnUse" width="4" height="4"><rect width="4" height="4" fill="#fff"/><g opacity="0.62"><circle cx="2.0" cy="2.0" r="0.75" fill="#000"/></g></pattern><pattern id="dotg2" patternUnits="userSpaceOnUse" width="5" height="5"><rect width="5" height="5" fill="#fff"/><g opacity="0.62"><circle cx="2.5" cy="2.5" r="0.6" fill="#000"/><circle cx="0" cy="0" r="0.6" fill="#000"/><circle cx="5" cy="0" r="0.6" fill="#000"/><circle cx="0" cy="5" r="0.6" fill="#000"/><circle cx="5" cy="5" r="0.6" fill="#000"/></g></pattern><pattern id="dotsS" patternUnits="userSpaceOnUse" width="5" height="5"><rect width="5" height="5" fill="#fff"/><g opacity="0.62"><circle cx="2.5" cy="2.5" r="0.55" fill="#000"/><circle cx="0" cy="0" r="0.55" fill="#000"/><circle cx="5" cy="0" r="0.55" fill="#000"/><circle cx="0" cy="5" r="0.55" fill="#000"/><circle cx="5" cy="5" r="0.55" fill="#000"/></g></pattern><pattern id="dotgD" patternUnits="userSpaceOnUse" width="3" height="3"><rect width="3" height="3" fill="#fff"/><g opacity="0.62"><circle cx="1.5" cy="1.5" r="0.7" fill="#000"/></g></pattern><pattern id="dotgS" patternUnits="userSpaceOnUse" width="3" height="3"><rect width="3" height="3" fill="#fff"/><g opacity="0.62"><circle cx="1.5" cy="1.5" r="0.5" fill="#000"/></g></pattern><pattern id="dotsG" patternUnits="userSpaceOnUse" width="4" height="4"><rect width="4" height="4" fill="#fff"/><g opacity="0.62"><circle cx="2.0" cy="2.0" r="0.6" fill="#000"/></g></pattern><pattern id="circS" patternUnits="userSpaceOnUse" width="5" height="5"><rect width="5" height="5" fill="#fff"/><g opacity="0.62"><circle cx="2.5" cy="2.5" r="1.5" fill="none" stroke="#000" stroke-width="0.8"/></g></pattern><pattern id="circL" patternUnits="userSpaceOnUse" width="7" height="7"><rect width="7" height="7" fill="#fff"/><g opacity="0.62"><circle cx="3.5" cy="3.5" r="2.2" fill="none" stroke="#000" stroke-width="0.8"/></g></pattern><pattern id="hexc" patternUnits="userSpaceOnUse" width="5" height="4"><rect width="5" height="4" fill="#fff"/><g opacity="0.62"><circle cx="2.5" cy="2" r="1.8" fill="none" stroke="#000" stroke-width="0.7"/></g></pattern><pattern id="hexStar" patternUnits="userSpaceOnUse" width="7" height="7"><rect width="7" height="7" fill="#fff"/><g opacity="0.62"><circle cx="3.5" cy="3.5" r="2.5" fill="none" stroke="#000" stroke-width="0.8"/><circle cx="0" cy="0" r="1.2" fill="#000"/><circle cx="7" cy="7" r="1.2" fill="#000"/><circle cx="7" cy="0" r="1.2" fill="#000"/><circle cx="0" cy="7" r="1.2" fill="#000"/></g></pattern><pattern id="triL" patternUnits="userSpaceOnUse" width="5" height="4"><rect width="5" height="4" fill="#fff"/><g opacity="0.62"><path d="M0 4 L2.5 0 L5 4 Z" fill="none" stroke="#000" stroke-width="0.7"/></g></pattern><pattern id="diagSteps" patternUnits="userSpaceOnUse" width="4" height="4"><rect width="4" height="4" fill="#fff"/><g opacity="0.62"><path d="M0.5 4 L0.5 2.5 L2.5 2.5 L2.5 0.5 L4 0.5" fill="none" stroke="#000" stroke-width="0.9"/></g></pattern><pattern id="checkF" patternUnits="userSpaceOnUse" width="2" height="2"><rect width="2" height="2" fill="#fff"/><g opacity="0.62"><rect x="0" y="0" width="1" height="1" fill="#333"/><rect x="1" y="1" width="1" height="1" fill="#333"/></g></pattern><pattern id="meander" patternUnits="userSpaceOnUse" width="6" height="6"><rect width="6" height="6" fill="#fff"/><g opacity="0.62"><path d="M0 4.5 L1.5 4.5 L1.5 1.5 L4.5 1.5 L4.5 4.5 L6 4.5" fill="none" stroke="#000" stroke-width="0.9"/></g></pattern><pattern id="squares" patternUnits="userSpaceOnUse" width="6" height="6"><rect width="6" height="6" fill="#fff"/><g opacity="0.62"><rect x="1.5" y="1.5" width="3" height="3" fill="none" stroke="#000" stroke-width="1"/></g></pattern><pattern id="stoneD" patternUnits="userSpaceOnUse" width="5" height="5"><rect width="5" height="5" fill="#000"/><g opacity="1"><rect x="0" y="0" width="5" height="5" fill="#222"/><circle cx="1.5" cy="1.5" r="1" fill="#fff"/><circle cx="3.8" cy="3.6" r="0.9" fill="#fff"/></g></pattern><pattern id="stoneD2" patternUnits="userSpaceOnUse" width="6" height="6"><rect width="6" height="6" fill="#000"/><g opacity="1"><rect x="0" y="0" width="6" height="6" fill="#444"/><circle cx="1.5" cy="2" r="1.3" fill="#ddd"/><circle cx="4.5" cy="4.5" r="1.2" fill="#eee"/><circle cx="4.5" cy="1" r="0.6" fill="#fff"/></g></pattern><pattern id="mosaic" patternUnits="userSpaceOnUse" width="7" height="7"><rect width="7" height="7" fill="#000"/><g opacity="1"><rect x="0" y="0" width="7" height="7" fill="#555"/><rect x="0.5" y="0.5" width="3" height="3" fill="#aaa"/><rect x="4" y="1" width="2.5" height="2" fill="#888"/><rect x="1" y="4" width="2.5" height="2.5" fill="#999"/><rect x="4" y="4" width="3" height="3" fill="#bbb"/></g></pattern><pattern id="blackShapes" patternUnits="userSpaceOnUse" width="5" height="5"><rect width="5" height="5" fill="#000"/><g opacity="1"><rect x="0" y="0" width="5" height="5" fill="#111"/><circle cx="1.5" cy="1.5" r="0.9" fill="#fff"/><circle cx="3.8" cy="3.5" r="0.9" fill="#fff"/></g></pattern></defs>
<rect x="566.0" y="327.40" width="19.0" height="19.5" fill="#000"/>
<rect x="586.5" y="327.90" width="18.0" height="18.5" fill="url(#dW)" stroke="#2a2a2a" stroke-width="0.9"/>
<rect x="606.5" y="327.90" width="18.0" height="18.5" fill="url(#hDash)" stroke="#2a2a2a" stroke-width="0.9"/>
<rect x="626.5" y="327.90" width="18.0" height="18.5" fill="url(#scales)" stroke="#2a2a2a" stroke-width="0.9"/>
<rect x="646.5" y="327.90" width="18.0" height="18.5" fill="url(#br1)" stroke="#2a2a2a" stroke-width="0.9"/>
<rect x="666.5" y="327.90" width="18.0" height="18.5" fill="url(#br2)" stroke="#2a2a2a" stroke-width="0.9"/>
<rect x="686.5" y="327.90" width="18.0" height="18.5" fill="url(#br3)" stroke="#2a2a2a" stroke-width="0.9"/>
<rect x="706.5" y="327.90" width="18.0" height="18.5" fill="url(#brD)" stroke="#2a2a2a" stroke-width="0.9"/>
<rect x="726.5" y="327.90" width="18.0" height="18.5" fill="url(#brL)" stroke="#2a2a2a" stroke-width="0.9"/>
<rect x="746.5" y="327.90" width="18.0" height="18.5" fill="url(#stone)" stroke="#2a2a2a" stroke-width="0.9"/>
<rect x="766.5" y="327.90" width="18.0" height="18.5" fill="url(#herr)" stroke="#2a2a2a" stroke-width="0.9"/>
<rect x="566.5" y="348.90" width="18.0" height="18.5" fill="url(#parq)" stroke="#2a2a2a" stroke-width="0.9"/>
<rect x="586.5" y="348.90" width="18.0" height="18.5" fill="url(#gsq)" stroke="#2a2a2a" stroke-width="0.9"/>
<rect x="606.5" y="348.90" width="18.0" height="18.5" fill="url(#dW)" stroke="#2a2a2a" stroke-width="0.9"/>
<rect x="626.5" y="348.90" width="18.0" height="18.5" fill="url(#dM)" stroke="#2a2a2a" stroke-width="0.9"/>
<rect x="646.5" y="348.90" width="18.0" height="18.5" fill="url(#dF)" stroke="#2a2a2a" stroke-width="0.9"/>
<rect x="666.5" y="348.90" width="18.0" height="18.5" fill="url(#dT)" stroke="#2a2a2a" stroke-width="0.9"/>
<rect x="686.5" y="348.90" width="18.0" height="18.5" fill="url(#dVF)" stroke="#2a2a2a" stroke-width="0.9"/>
<rect x="706.5" y="348.90" width="18.0" height="18.5" fill="url(#dVF2)" stroke="#2a2a2a" stroke-width="0.9"/>
<rect x="726.5" y="348.90" width="18.0" height="18.5" fill="url(#xD)" stroke="#2a2a2a" stroke-width="0.9"/>
<rect x="746.5" y="348.90" width="18.0" height="18.5" fill="url(#xF)" stroke="#2a2a2a" stroke-width="0.9"/>
<rect x="766.5" y="348.90" width="18.0" height="18.5" fill="url(#br4)" stroke="#2a2a2a" stroke-width="0.9"/>
<rect x="566.5" y="369.90" width="18.0" height="18.5" fill="url(#brV)" stroke="#2a2a2a" stroke-width="0.9"/>
<rect x="586.5" y="369.90" width="18.0" height="18.5" fill="url(#stip)" stroke="#2a2a2a" stroke-width="0.9"/>
<rect x="606.5" y="369.90" width="18.0" height="18.5" fill="url(#basket)" stroke="#2a2a2a" stroke-width="0.9"/>
<rect x="626.5" y="369.90" width="18.0" height="18.5" fill="url(#wood)" stroke="#2a2a2a" stroke-width="0.9"/>
<rect x="646.5" y="369.90" width="18.0" height="18.5" fill="url(#slBrick)" stroke="#2a2a2a" stroke-width="0.9"/>
<rect x="666.5" y="369.90" width="18.0" height="18.5" fill="url(#stipS)" stroke="#2a2a2a" stroke-width="0.9"/>
<rect x="686.5" y="369.90" width="18.0" height="18.5" fill="url(#circS)" stroke="#2a2a2a" stroke-width="0.9"/>
<rect x="706.5" y="369.90" width="18.0" height="18.5" fill="url(#hF)" stroke="#2a2a2a" stroke-width="0.9"/>
<rect x="726.5" y="369.90" width="18.0" height="18.5" fill="url(#hDashed)" stroke="#2a2a2a" stroke-width="0.9"/>
<rect x="746.5" y="369.90" width="18.0" height="18.5" fill="url(#dS)" stroke="#2a2a2a" stroke-width="0.9"/>
<rect x="766.5" y="369.90" width="18.0" height="18.5" fill="url(#dotg)" stroke="#2a2a2a" stroke-width="0.9"/>
<rect x="566.5" y="390.90" width="18.0" height="18.5" fill="url(#dashes)" stroke="#2a2a2a" stroke-width="0.9"/>
<rect x="586.5" y="390.90" width="18.0" height="18.5" fill="url(#hlD)" stroke="#2a2a2a" stroke-width="0.9"/>
<rect x="606.5" y="390.90" width="18.0" height="18.5" fill="url(#stipS2)" stroke="#2a2a2a" stroke-width="0.9"/>
<rect x="626.5" y="390.90" width="18.0" height="18.5" fill="url(#stoneD)" stroke="#2a2a2a" stroke-width="0.9"/>
<rect x="646.5" y="390.90" width="18.0" height="18.5" fill="url(#stoneD2)" stroke="#2a2a2a" stroke-width="0.9"/>
<rect x="666.5" y="390.90" width="18.0" height="18.5" fill="url(#hArrow)" stroke="#2a2a2a" stroke-width="0.9"/>
<rect x="686.5" y="390.90" width="18.0" height="18.5" fill="url(#dotg2)" stroke="#2a2a2a" stroke-width="0.9"/>
<rect x="706.5" y="390.90" width="18.0" height="18.5" fill="url(#plaid)" stroke="#2a2a2a" stroke-width="0.9"/>
<rect x="726.5" y="390.90" width="18.0" height="18.5" fill="url(#circL)" stroke="#2a2a2a" stroke-width="0.9"/>
<rect x="746.5" y="390.90" width="18.0" height="18.5" fill="url(#hexc)" stroke="#2a2a2a" stroke-width="0.9"/>
<rect x="766.5" y="390.90" width="18.0" height="18.5" fill="url(#mosaic)" stroke="#2a2a2a" stroke-width="0.9"/>
<rect x="566.5" y="411.90" width="18.0" height="18.5" fill="url(#hTick)" stroke="#2a2a2a" stroke-width="0.9"/>
<rect x="586.5" y="411.90" width="18.0" height="18.5" fill="url(#hS)" stroke="#2a2a2a" stroke-width="0.9"/>
<rect x="606.5" y="411.90" width="18.0" height="18.5" fill="url(#dotsS)" stroke="#2a2a2a" stroke-width="0.9"/>
<rect x="626.5" y="411.90" width="18.0" height="18.5" fill="url(#grid)" stroke="#2a2a2a" stroke-width="0.9"/>
<rect x="646.5" y="411.90" width="18.0" height="18.5" fill="url(#triL)" stroke="#2a2a2a" stroke-width="0.9"/>
<rect x="666.5" y="411.90" width="18.0" height="18.5" fill="url(#hT)" stroke="#2a2a2a" stroke-width="0.9"/>
<rect x="686.5" y="411.90" width="18.0" height="18.5" fill="url(#hT2)" stroke="#2a2a2a" stroke-width="0.9"/>
<rect x="706.5" y="411.90" width="18.0" height="18.5" fill="url(#stipD)" stroke="#2a2a2a" stroke-width="0.9"/>
<rect x="726.5" y="411.90" width="18.0" height="18.5" fill="url(#hexStar)" stroke="#2a2a2a" stroke-width="0.9"/>
<rect x="746.5" y="411.90" width="18.0" height="18.5" fill="url(#dW2)" stroke="#2a2a2a" stroke-width="0.9"/>
<rect x="766.5" y="411.90" width="18.0" height="18.5" fill="url(#dotgD)" stroke="#2a2a2a" stroke-width="0.9"/>
<rect x="566.5" y="432.90" width="18.0" height="18.5" fill="url(#meander)" stroke="#2a2a2a" stroke-width="0.9"/>
<rect x="586.5" y="432.90" width="18.0" height="18.5" fill="url(#br5)" stroke="#2a2a2a" stroke-width="0.9"/>
<rect x="606.5" y="432.90" width="18.0" height="18.5" fill="url(#plaid2)" stroke="#2a2a2a" stroke-width="0.9"/>
<rect x="626.5" y="432.90" width="18.0" height="18.5" fill="url(#dotgS)" stroke="#2a2a2a" stroke-width="0.9"/>
<rect x="646.5" y="432.90" width="18.0" height="18.5" fill="url(#gFine)" stroke="#2a2a2a" stroke-width="0.9"/>
<rect x="666.5" y="432.90" width="18.0" height="18.5" fill="url(#dotsG)" stroke="#2a2a2a" stroke-width="0.9"/>
<rect x="686.5" y="432.90" width="18.0" height="18.5" fill="url(#hDashed2)" stroke="#2a2a2a" stroke-width="0.9"/>
<rect x="706.5" y="432.90" width="18.0" height="18.5" fill="url(#herrBrick)" stroke="#2a2a2a" stroke-width="0.9"/>
<rect x="726.5" y="432.90" width="18.0" height="18.5" fill="url(#diaF)" stroke="#2a2a2a" stroke-width="0.9"/>
<rect x="746.5" y="432.90" width="18.0" height="18.5" fill="url(#vL)" stroke="#2a2a2a" stroke-width="0.9"/>
<rect x="766.5" y="432.90" width="18.0" height="18.5" fill="url(#blackShapes)" stroke="#2a2a2a" stroke-width="0.9"/>
<rect x="566.5" y="453.90" width="18.0" height="18.5" fill="url(#squares)" stroke="#2a2a2a" stroke-width="0.9"/>
<rect x="586.5" y="453.90" width="18.0" height="18.5" fill="url(#gFine2)" stroke="#2a2a2a" stroke-width="0.9"/>
<rect x="606.5" y="453.90" width="18.0" height="18.5" fill="url(#triL)" stroke="#2a2a2a" stroke-width="0.9"/>
<rect x="626.5" y="453.90" width="18.0" height="18.5" fill="url(#diagSteps)" stroke="#2a2a2a" stroke-width="0.9"/>
<rect x="646.5" y="453.90" width="18.0" height="18.5" fill="url(#dL)" stroke="#2a2a2a" stroke-width="0.9"/>
<rect x="666.5" y="453.90" width="18.0" height="18.5" fill="url(#gMed)" stroke="#2a2a2a" stroke-width="0.9"/>
<rect x="686.5" y="453.90" width="18.0" height="18.5" fill="url(#checkF)" stroke="#2a2a2a" stroke-width="0.9"/>
<rect x="706.5" y="453.90" width="18.0" height="18.5" fill="url(#dBack)" stroke="#2a2a2a" stroke-width="0.9"/>
<rect x="726.5" y="453.90" width="18.0" height="18.5" fill="url(#hL)" stroke="#2a2a2a" stroke-width="0.9"/>
<rect x="746.5" y="453.90" width="18.0" height="18.5" fill="url(#vL2)" stroke="#2a2a2a" stroke-width="0.9"/>
<rect x="772.5" y="459.90" width="6" height="6" fill="none" stroke="#bbb" stroke-width="0.7"/>
</svg>
<div class="b" style="left:0px;top:473.5px;width:562px;height:12px;background:#f0f0f0;"></div>
<div class="b" style="left:13px;top:475px;width:31px;height:9.5px;background:#fff;border:1px solid #bbb;border-top:none;border-bottom:1.5px solid #333;"></div>
<div class="t" style="left:21px;top:475.60px;font-size:7.01px;transform:scaleX(0.885);transform-origin:0 0;color:#111;font-weight:normal;">Modell</div>
<div class="b" style="left:45px;top:475px;width:35px;height:9.5px;background:#e4e4e4;border-right:1px solid #ccc;"></div>
<div class="t" style="left:54px;top:475.60px;font-size:7.01px;transform:scaleX(0.885);transform-origin:0 0;color:#999;font-weight:normal;">Papier 1</div>
<div class="b" style="left:92px;top:474px;width:470px;height:11px;background:#f9f9f9;border-bottom:1px solid #dcdcdc;"></div>
<div class="b" style="left:80px;top:475px;width:12px;height:9.5px;background:#e8e8e8;"></div>
<div class="b" style="left:92px;top:475px;width:1px;height:9px;background:#bbb;"></div>
<div class="t" style="left:95px;top:474.38px;font-size:9.04px;transform:scaleX(0.885);transform-origin:0 0;color:#222;font-weight:normal;">‹</div>
<div class="b" style="left:387.5px;top:476px;width:109px;height:7.5px;background:#c9c9c9;"></div>
<div class="b" style="left:0px;top:485px;width:800px;height:21px;background:#f0f0f0;"></div>
<div class="b" style="left:32.5px;top:487px;width:1px;height:18px;background:#c8c8c8;"></div>
<div class="t" style="left:35px;top:487.3px;width:23px;overflow:hidden;font-size:6.2px;color:#1a1a1a;">Maßstab</div>
<div class="b" style="left:35px;top:495.5px;width:23px;height:9px;background:#fbfbfb;border:1px solid #dadada;"></div>
<div class="t" style="left:37px;top:495.89px;font-size:7.34px;transform:scaleX(0.885);transform-origin:0 0;color:#666;font-weight:normal;">1</div>
<div class="t" style="left:52.5px;top:494.75px;font-size:5.08px;transform:scaleX(0.885);transform-origin:0 0;color:#333;font-weight:normal;">▴</div>
<div class="t" style="left:52.5px;top:498.95px;font-size:5.08px;transform:scaleX(0.885);transform-origin:0 0;color:#333;font-weight:normal;">▾</div>
<div class="t" style="left:60px;top:487.3px;width:23px;overflow:hidden;font-size:6.2px;color:#1a1a1a;">Maßstab</div>
<div class="b" style="left:60px;top:495.5px;width:23px;height:9px;background:#fbfbfb;border:1px solid #dadada;"></div>
<div class="t" style="left:62px;top:495.89px;font-size:7.34px;transform:scaleX(0.885);transform-origin:0 0;color:#666;font-weight:normal;">1</div>
<div class="t" style="left:77.5px;top:494.75px;font-size:5.08px;transform:scaleX(0.885);transform-origin:0 0;color:#333;font-weight:normal;">▴</div>
<div class="t" style="left:77.5px;top:498.95px;font-size:5.08px;transform:scaleX(0.885);transform-origin:0 0;color:#333;font-weight:normal;">▾</div>
<div class="t" style="left:85px;top:487.3px;width:23px;overflow:hidden;font-size:6.2px;color:#1a1a1a;">Maßstab</div>
<div class="b" style="left:85px;top:495.5px;width:23px;height:9px;background:#fbfbfb;border:1px solid #dadada;"></div>
<div class="t" style="left:87px;top:495.89px;font-size:7.34px;transform:scaleX(0.885);transform-origin:0 0;color:#666;font-weight:normal;">1</div>
<div class="t" style="left:102.5px;top:494.75px;font-size:5.08px;transform:scaleX(0.885);transform-origin:0 0;color:#333;font-weight:normal;">▴</div>
<div class="t" style="left:102.5px;top:498.95px;font-size:5.08px;transform:scaleX(0.885);transform-origin:0 0;color:#333;font-weight:normal;">▾</div>
<div class="t" style="left:110px;top:487.3px;width:23px;overflow:hidden;font-size:6.2px;color:#1a1a1a;">Größe X</div>
<div class="b" style="left:110px;top:495.5px;width:23px;height:9px;background:#fbfbfb;border:1px solid #dadada;"></div>
<div class="t" style="left:112px;top:495.89px;font-size:7.34px;transform:scaleX(0.885);transform-origin:0 0;color:#8a8a8a;font-weight:normal;">0 mm</div>
<div class="t" style="left:135px;top:487.3px;width:23px;overflow:hidden;font-size:6.2px;color:#1a1a1a;">Größe Y</div>
<div class="b" style="left:135px;top:495.5px;width:23px;height:9px;background:#fbfbfb;border:1px solid #dadada;"></div>
<div class="t" style="left:137px;top:495.89px;font-size:7.34px;transform:scaleX(0.885);transform-origin:0 0;color:#8a8a8a;font-weight:normal;">0 mm</div>
<div class="t" style="left:160px;top:487.3px;width:23px;overflow:hidden;font-size:6.2px;color:#1a1a1a;">Größe Z</div>
<div class="b" style="left:160px;top:495.5px;width:23px;height:9px;background:#fbfbfb;border:1px solid #dadada;"></div>
<div class="t" style="left:162px;top:495.89px;font-size:7.34px;transform:scaleX(0.885);transform-origin:0 0;color:#8a8a8a;font-weight:normal;">0 mm</div>
<div class="t" style="left:185px;top:487.3px;width:23px;overflow:hidden;font-size:6.2px;color:#1a1a1a;">Pos X</div>
<div class="b" style="left:185px;top:495.5px;width:23px;height:9px;background:#fbfbfb;border:1px solid #dadada;"></div>
<div class="t" style="left:187px;top:495.89px;font-size:7.34px;transform:scaleX(0.885);transform-origin:0 0;color:#8a8a8a;font-weight:normal;">0 mm</div>
<div class="t" style="left:210px;top:487.3px;width:23px;overflow:hidden;font-size:6.2px;color:#1a1a1a;">Pos Y</div>
<div class="b" style="left:210px;top:495.5px;width:23px;height:9px;background:#fbfbfb;border:1px solid #dadada;"></div>
<div class="t" style="left:212px;top:495.89px;font-size:7.34px;transform:scaleX(0.885);transform-origin:0 0;color:#8a8a8a;font-weight:normal;">0 mm</div>
<div class="t" style="left:235px;top:487.3px;width:23px;overflow:hidden;font-size:6.2px;color:#1a1a1a;">Pos Z</div>
<div class="b" style="left:235px;top:495.5px;width:23px;height:9px;background:#fbfbfb;border:1px solid #dadada;"></div>
<div class="t" style="left:237px;top:495.89px;font-size:7.34px;transform:scaleX(0.885);transform-origin:0 0;color:#8a8a8a;font-weight:normal;">0 mm</div>
<div class="t" style="left:260px;top:487.3px;width:23px;overflow:hidden;font-size:6.2px;color:#1a1a1a;">Delta X</div>
<div class="b" style="left:260px;top:495.5px;width:23px;height:9px;background:#fbfbfb;border:1px solid #dadada;"></div>
<div class="t" style="left:262px;top:495.89px;font-size:7.34px;transform:scaleX(0.885);transform-origin:0 0;color:#8a8a8a;font-weight:normal;">0 mm</div>
<div class="t" style="left:285px;top:487.3px;width:23px;overflow:hidden;font-size:6.2px;color:#1a1a1a;">Delta Y</div>
<div class="b" style="left:285px;top:495.5px;width:23px;height:9px;background:#fbfbfb;border:1px solid #dadada;"></div>
<div class="t" style="left:287px;top:495.89px;font-size:7.34px;transform:scaleX(0.885);transform-origin:0 0;color:#8a8a8a;font-weight:normal;">0 mm</div>
<div class="t" style="left:310px;top:487.3px;width:23px;overflow:hidden;font-size:6.2px;color:#1a1a1a;">Delta Z</div>
<div class="b" style="left:310px;top:495.5px;width:23px;height:9px;background:#fbfbfb;border:1px solid #dadada;"></div>
<div class="t" style="left:312px;top:495.89px;font-size:7.34px;transform:scaleX(0.885);transform-origin:0 0;color:#8a8a8a;font-weight:normal;">0 mm</div>
<div class="t" style="left:335px;top:487.3px;width:23px;overflow:hidden;font-size:6.2px;color:#1a1a1a;">Drehg X</div>
<div class="b" style="left:335px;top:495.5px;width:23px;height:9px;background:#fbfbfb;border:1px solid #dadada;"></div>
<div class="t" style="left:337px;top:495.89px;font-size:7.34px;transform:scaleX(0.885);transform-origin:0 0;color:#8a8a8a;font-weight:normal;">0</div>
<div class="t" style="left:352.5px;top:494.75px;font-size:5.08px;transform:scaleX(0.885);transform-origin:0 0;color:#333;font-weight:normal;">▴</div>
<div class="t" style="left:352.5px;top:498.95px;font-size:5.08px;transform:scaleX(0.885);transform-origin:0 0;color:#333;font-weight:normal;">▾</div>
<div class="t" style="left:360px;top:487.3px;width:23px;overflow:hidden;font-size:6.2px;color:#1a1a1a;">Drehg Y</div>
<div class="b" style="left:360px;top:495.5px;width:23px;height:9px;background:#fbfbfb;border:1px solid #dadada;"></div>
<div class="t" style="left:362px;top:495.89px;font-size:7.34px;transform:scaleX(0.885);transform-origin:0 0;color:#8a8a8a;font-weight:normal;">0</div>
<div class="t" style="left:377.5px;top:494.75px;font-size:5.08px;transform:scaleX(0.885);transform-origin:0 0;color:#333;font-weight:normal;">▴</div>
<div class="t" style="left:377.5px;top:498.95px;font-size:5.08px;transform:scaleX(0.885);transform-origin:0 0;color:#333;font-weight:normal;">▾</div>
<div class="t" style="left:385px;top:487.3px;width:23px;overflow:hidden;font-size:6.2px;color:#1a1a1a;">Drehg Z</div>
<div class="b" style="left:385px;top:495.5px;width:23px;height:9px;background:#fbfbfb;border:1px solid #dadada;"></div>
<div class="t" style="left:387px;top:495.89px;font-size:7.34px;transform:scaleX(0.885);transform-origin:0 0;color:#8a8a8a;font-weight:normal;">0</div>
<div class="t" style="left:402.5px;top:494.75px;font-size:5.08px;transform:scaleX(0.885);transform-origin:0 0;color:#333;font-weight:normal;">▴</div>
<div class="t" style="left:402.5px;top:498.95px;font-size:5.08px;transform:scaleX(0.885);transform-origin:0 0;color:#333;font-weight:normal;">▾</div>
<div class="t" style="left:410px;top:487.3px;width:23px;overflow:hidden;font-size:6.2px;color:#1a1a1a;">Delta Al</div>
<div class="b" style="left:410px;top:495.5px;width:23px;height:9px;background:#fbfbfb;border:1px solid #dadada;"></div>
<div class="t" style="left:412px;top:495.89px;font-size:7.34px;transform:scaleX(0.885);transform-origin:0 0;color:#8a8a8a;font-weight:normal;">0 mm</div>
<div class="t" style="left:435px;top:487.3px;width:23px;overflow:hidden;font-size:6.2px;color:#1a1a1a;">Delta W</div>
<div class="b" style="left:435px;top:495.5px;width:23px;height:9px;background:#fbfbfb;border:1px solid #dadada;"></div>
<div class="t" style="left:437px;top:495.89px;font-size:7.34px;transform:scaleX(0.885);transform-origin:0 0;color:#8a8a8a;font-weight:normal;">0</div>
<div class="t" style="left:452.5px;top:494.75px;font-size:5.08px;transform:scaleX(0.885);transform-origin:0 0;color:#333;font-weight:normal;">▴</div>
<div class="t" style="left:452.5px;top:498.95px;font-size:5.08px;transform:scaleX(0.885);transform-origin:0 0;color:#333;font-weight:normal;">▾</div>
<div class="b" style="left:460.5px;top:487px;width:1px;height:18px;background:#c8c8c8;"></div>
<div class="b" style="left:490px;top:487px;width:1px;height:18px;background:#c8c8c8;"></div>
<div class="b" style="left:529.5px;top:487px;width:1px;height:18px;background:#c8c8c8;"></div>
<div class="b" style="left:798px;top:485px;width:1px;height:21px;background:#c8c8c8;"></div>
<svg style="left:0;top:0" width="800" height="600" viewBox="0 0 800 600">
<path d="M5.5 98 L5.5 102.5 L10.5 102.5" fill="none" stroke="#1a1a1a" stroke-width="1.1"/>
<circle cx="6" cy="98.2" r="1" fill="#3a3aa0"/><circle cx="10.2" cy="102.4" r="0.9" fill="#3a3aa0"/><rect x="7" y="99.5" width="2" height="1.6" fill="#555"/>
<path d="M5 108.5 L9.5 113.5" stroke="#1a1a1a" stroke-width="1.1"/><path d="M6 111 L7.5 109.5 M8 113 L10.2 110.5" stroke="#1a1a1a" stroke-width="0.8"/><circle cx="10.5" cy="108.5" r="0.8" fill="#4040b0"/>
<path d="M5.2 124.5 L8.5 118.8 L11 124.5 Z" fill="none" stroke="#1a1a1a" stroke-width="1.1"/><circle cx="10.3" cy="119.5" r="0.7" fill="#4040b0"/>
<rect x="65.3" y="98.2" width="5.6" height="5.3" fill="#8a8ac8" stroke="#2a2a50" stroke-width="1"/><rect x="67" y="99.8" width="2.3" height="2.2" fill="#3030a0"/>
<path d="M65 110 Q67 107 68.5 110 Q70 113 72 110" fill="none" stroke="#1a1a1a" stroke-width="1"/><circle cx="65.5" cy="112.5" r="0.7" fill="#1a1a1a"/><circle cx="71.5" cy="108.5" r="0.7" fill="#4040b0"/>
<path d="M65.5 120 L69.5 119 L72 120.5 L72 124.5 L68 125 L65.5 123.5 Z" fill="#b0b0e0" stroke="#303090" stroke-width="0.9"/><path d="M65.5 120 L68 121.3 L72 120.5 M68 121.3 L68 125" fill="none" stroke="#303090" stroke-width="0.6"/>
<path d="M112 100 L113.5 98 L115 99.5 L117 97.5 L118 98.5 L118 103.5 L112 103.5 Z" fill="#1a1a1a"/>
<path d="M184 98.5 Q187 96 189.5 98.5 Q188 100.5 185.5 100 Q183 101.5 186 103 Q189 103.5 190 101" fill="none" stroke="#1a1a1a" stroke-width="1.2"/>
<circle cx="185" cy="110.8" r="1.5" fill="#b03040"/><circle cx="188.5" cy="110.8" r="1.5" fill="#208040"/><rect x="183.5" y="109" width="6.5" height="1" fill="#666" opacity="0.5"/>
<rect x="183.5" y="119" width="4" height="4" fill="#cfe0f0" stroke="#2a6aa0" stroke-width="0.9"/><rect x="186" y="121" width="4" height="4" fill="#e0eef8" stroke="#2a6aa0" stroke-width="0.9"/>
<path d="M256 98 L258.5 96.5 L260 99 L262 101 L261 103 L258.5 100.5 Z" fill="#1a1a1a"/><path d="M256.5 96 L256 94.8" stroke="#1a1a1a" stroke-width="0.6"/>
<rect x="320" y="96.3" width="8.6" height="7" fill="#fff" stroke="#8a1a1a" stroke-width="1.2"/>
<rect x="326.5" y="100.5" width="7.5" height="7.5" fill="#fff" stroke="#111" stroke-width="1.2"/>
<path d="M322 98.5 L322 101.5 M321 100 L323.5 100" stroke="#c02020" stroke-width="0.8"/><path d="M329 105.5 L332 102.5 L332 105.5 Z" fill="#2040c0"/>
<path d="M362 98 L365.5 98 L366.5 99 L369 99 L369 103 L362 103 Z" fill="#222"/><path d="M363 100 L368 100" stroke="#e0c040" stroke-width="1"/><circle cx="370" cy="99" r="0.8" fill="#d02020"/>
<circle cx="415" cy="100" r="2.5" fill="none" stroke="#b8b8b8" stroke-width="0.9"/>
<path d="M362 109 L365.5 109 L366.5 110 L369 110 L369 114 L362 114 Z" fill="#bdbdbd"/>
<path d="M362 124.5 L366 120 L369.5 124.5 Z" fill="#d0d0d0"/>
<ellipse cx="462" cy="98" rx="3.5" ry="1.4" fill="none" stroke="#b0b0b0" stroke-width="0.9"/><path d="M458.5 98 L458.5 102 Q462 104 465.5 102 L465.5 98" fill="none" stroke="#b0b0b0" stroke-width="0.9"/>
<ellipse cx="461.5" cy="108.5" rx="3.2" ry="1.3" fill="none" stroke="#1a1a1a" stroke-width="0.9"/><path d="M458.3 108.5 L458.3 113.5 Q461.5 115.5 464.7 113.5 L464.7 108.5 M458.3 111 Q461.5 113 464.7 111" fill="none" stroke="#1a1a1a" stroke-width="0.9"/>
<path d="M534 101.5 L536.5 97.5 M536.5 97.5 L538 99 M538.5 100 L541 100 M540 99 L541 100 L540 101" fill="none" stroke="#aaa" stroke-width="0.8"/>
<rect x="534" y="107.3" width="7" height="7" fill="#3a4a6a"/><rect x="535" y="108.3" width="3" height="3" fill="#8898b8"/>
<path d="M535 124.5 L540.5 119 M535.5 119.5 L538 122 M539 122.5 L541 124.5" fill="none" stroke="#1a1a1a" stroke-width="0.9"/><circle cx="538" cy="121.5" r="1" fill="#888"/>
<rect x="549.5" y="96.8" width="6.5" height="6.5" fill="#fff" stroke="#1a2a4a" stroke-width="1"/><path d="M551 100 L552.5 101.8 L555.5 98" fill="none" stroke="#1a2a7a" stroke-width="0.9"/>
<path d="M549.5 108 L556 108 M549.5 109.8 L554 109.8" stroke="#333" stroke-width="0.7"/><path d="M550.5 111.5 L552.3 114 L555.5 110.5" fill="none" stroke="#2a3aa0" stroke-width="1.1"/>
<rect x="610" y="97.5" width="7" height="4.8" fill="#2048c0"/><path d="M610 97.5 L613.5 100 L617 97.5" fill="none" stroke="#a0b8ff" stroke-width="0.5"/>
<rect x="610" y="107" width="6.5" height="7" fill="#1a4a80"/><rect x="611.3" y="108.3" width="4" height="4.5" fill="#5aa0d0"/>
<path d="M657 98.5 L660 97 L661.5 99.5 L659 101 Z" fill="#4a5a20"/><circle cx="662.5" cy="101.5" r="0.9" fill="#333"/><path d="M660 100 L663 102" stroke="#888" stroke-width="0.6"/>
<path d="M665.5 99.5 L667.5 99.5 L666.5 100.8 Z" fill="#222"/>
<path d="M692.5 96 L700 96 L700 98.5 L704.3 98.5 L704.3 106 L700 106 L700 108.3 L692.5 108.3 Z" fill="#e8d820" stroke="#14146a" stroke-width="1.3"/>
<path d="M693.5 101 L698 96.8 M693.5 105 L702 97.5 M695.5 107.5 L703.5 100" stroke="#6a6a20" stroke-width="1"/>
<rect x="722" y="95.5" width="12.5" height="12" rx="2" fill="#e8e8f0" stroke="#222" stroke-width="1.1"/>
<circle cx="727.5" cy="99.5" r="2.2" fill="#e0b020"/><path d="M723.5 106 Q727.5 101 732 106 Z" fill="#e09030"/><circle cx="731" cy="100.5" r="1.3" fill="#3a4a9a"/><path d="M724 101.5 L731 101.5" stroke="#2a2a7a" stroke-width="0.8"/>
<path d="M567 166 L570.5 160.5 L574 166 Z" fill="none" stroke="#222" stroke-width="0.9"/><circle cx="572.5" cy="161" r="1.2" fill="none" stroke="#222" stroke-width="0.7"/>
<path d="M577 166 L580.5 160.5 L584 166 Z" fill="none" stroke="#222" stroke-width="0.9"/><circle cx="582.5" cy="161" r="1.2" fill="none" stroke="#222" stroke-width="0.7"/>
<path d="M586 166 L589.5 160.5 L593 166 Z" fill="none" stroke="#222" stroke-width="0.9"/><circle cx="591.5" cy="161" r="1.2" fill="none" stroke="#222" stroke-width="0.7"/>
<rect x="567.5" y="164" width="2.5" height="2" fill="#2a6a2a"/>
<path d="M615.5 166 L620.5 160" stroke="#a05020" stroke-width="1.1"/><path d="M615 166.5 L621.5 166.5" stroke="#c0a060" stroke-width="0.6"/>
<rect x="768.5" y="160.5" width="4.5" height="5" fill="#c01010"/><path d="M773.5 160.5 L775 160.5 L775 166 L773.5 166" stroke="#555" stroke-width="0.8" fill="none"/>
<path d="M782 159.5 L784.5 163 L782 166.5 L779.5 163 Z" fill="#3a4a8a"/><rect x="780.8" y="162" width="2.4" height="2" fill="#111"/>
<rect x="681" y="300.5" width="6" height="4" fill="#4a8ac0" stroke="#1a3a6a" stroke-width="0.7"/><path d="M681.5 306 L688 306" stroke="#1a3a6a" stroke-width="0.9"/><rect x="683" y="299" width="5" height="1.2" fill="#1a3a6a"/>
<rect x="703.5" y="300" width="6.5" height="6.5" fill="none" stroke="#1a3a6a" stroke-width="0.8"/><rect x="705.5" y="302" width="2.5" height="2.5" fill="#4a8ac0"/>
<rect x="726" y="300" width="6" height="6.5" fill="none" stroke="#555" stroke-width="0.7"/><path d="M727 301.5 L729 301.5 M727 303.5 L729 303.5 M727 305.5 L729 305.5 M730 301.5 L731.5 301.5 M730 304.5 L731.5 304.5" stroke="#333" stroke-width="0.6"/><rect x="729.5" y="302.5" width="2" height="1.6" fill="#2a5aa0"/>
<rect x="567.8" y="318" width="5.5" height="5.5" fill="#fff" stroke="#333" stroke-width="0.9"/><path d="M568.5 318.5 L572.5 322.8 M572.5 318.5 L568.5 322.8" stroke="#333" stroke-width="0.6"/>
<rect x="577.5" y="318" width="6" height="5.5" fill="#111"/><path d="M578.5 322.8 L582.8 318.8 L582.8 322.8 Z" fill="#eee"/>
<rect x="587" y="318" width="6" height="6" fill="#1a8a3a"/><circle cx="590" cy="321" r="1.8" fill="#50e070"/>
<path d="M625.5 318.5 L630.5 324 M625.5 318.5 L628.5 318.5 M625.5 318.5 L625.5 321.5" stroke="#1a2a6a" stroke-width="1"/><rect x="624.7" y="317.3" width="6.5" height="7.5" fill="none" stroke="#aaa" stroke-width="0.5"/>
<path d="M651.5 321 L654 318.5 L656.5 321 L654 323.5 Z" fill="#2a8a3a"/><path d="M651 322.5 L657 322.5" stroke="#222" stroke-width="0.8"/><rect x="650.7" y="317.3" width="6.8" height="7.5" fill="none" stroke="#aaa" stroke-width="0.5"/>
<rect x="663.5" y="318" width="3" height="6.5" rx="1.2" fill="#3a7ad0"/><rect x="668" y="319.5" width="20" height="3.5" fill="#e4e4e4"/>
<path d="M779 321 L781.5 318 L784 321 L781.5 324 Z" fill="none" stroke="#3a3aa0" stroke-width="1"/><circle cx="781.5" cy="321" r="0.8" fill="#3a3aa0"/>
<path d="M774.5 478.5 L777 480.5 L774.5 482.5" fill="none" stroke="#222" stroke-width="1"/>
<path d="M5.5 496 Q7.5 499.5 11 497.5" fill="none" stroke="#b01020" stroke-width="1.6"/><path d="M7 494 L12 498 M9 493.5 L11 495.5" stroke="#111" stroke-width="1.1"/>
<path d="M15 493.5 L20 498.5 M20 493.5 L15 498.5" stroke="#bdbdbd" stroke-width="1.3"/>
<rect x="24.5" y="493" width="6.5" height="6" fill="#d0d0d0" stroke="#c0c0c0" stroke-width="0.6"/>
<path d="M464 498 L467 495 L469.5 493.5 M465 499 L466 495.5" stroke="#222" stroke-width="1" fill="none"/><circle cx="468.5" cy="494" r="1" fill="none" stroke="#222" stroke-width="0.7"/>
<circle cx="474.5" cy="494" r="1.3" fill="none" stroke="#333" stroke-width="0.8"/><path d="M476.5 495 L476.5 498 Q478 499.5 479 497" fill="none" stroke="#333" stroke-width="0.8"/>
<path d="M482 498 L484.5 494 L486 496.5 L488.5 495" fill="none" stroke="#222" stroke-width="0.9"/>
<rect x="491.5" y="491" width="9" height="9" fill="#cde4f7" stroke="#9ac0e0" stroke-width="0.6"/>
<rect x="493" y="492.5" width="6.5" height="6.5" fill="#2a8a6a"/><path d="M493 492.5 L499.5 499" stroke="#0a3a2a" stroke-width="0.8"/>
<path d="M503 499 L503 493 L509.5 493" fill="none" stroke="#2a8a6a" stroke-width="1.1"/><path d="M504.5 497.5 L509 493.5 M505 499 L510 499" stroke="#222" stroke-width="0.8"/>
<rect x="513" y="492.5" width="6.5" height="6.5" fill="#2aa040"/><path d="M514 498 L518.5 493.5" stroke="#111" stroke-width="0.8"/>
<path d="M522 492.5 L529 492.5 L529 497 L526 497 L524.5 499.5 L522 499.5 Z" fill="#2ab040" stroke="#1a6a2a" stroke-width="0.6"/>
<path d="M533 493 L537 493 L537 499 M535 496 L541 496 L541 499" stroke="#1a8a2a" stroke-width="1.1" fill="none"/><rect x="533" y="492.5" width="3" height="3" fill="#2a7a2a"/>
<path d="M544 494 L548 498" stroke="#d02020" stroke-width="1.2"/><rect x="546" y="496" width="3" height="3" fill="#2030c0"/>
<path d="M552 499 L554.5 493.5 L557 499 Z" fill="none" stroke="#c02020" stroke-width="0.9"/><rect x="553.3" y="496.5" width="2.5" height="2" fill="#c02020"/>
<path d="M562 499 L564 493.5 L567.5 494 L568 499 Z" fill="none" stroke="#aaa" stroke-width="0.8"/>
<rect x="570.5" y="493" width="6" height="6" fill="none" stroke="#223" stroke-width="0.6"/><rect x="571" y="493.5" width="2.2" height="2.2" fill="#202060"/><rect x="573.8" y="496.3" width="2.2" height="2.2" fill="#c02020"/><rect x="573.8" y="493.5" width="2.2" height="2.2" fill="#202060"/><rect x="571" y="496.3" width="2.2" height="2.2" fill="#202060"/>
<path d="M580 499 L580 494.5 L583 494.5 M582.5 497 L586 497 L586 493" fill="none" stroke="#b8b8b8" stroke-width="0.8"/>
<path d="M589 499 L589 494.5 L592 494.5 M591.5 497 L595 497 L595 493" fill="none" stroke="#b8b8b8" stroke-width="0.8"/>
<path d="M598 499 L598 494.5 L601 494.5 M600.5 497 L604 497 L604 493" fill="none" stroke="#b8b8b8" stroke-width="0.8"/>
<path d="M607 499 L607 494.5 L610 494.5 M609.5 497 L613 497 L613 493" fill="none" stroke="#b8b8b8" stroke-width="0.8"/>
<path d="M616 499 L616 494.5 L619 494.5 M618.5 497 L622 497 L622 493" fill="none" stroke="#b8b8b8" stroke-width="0.8"/>
<path d="M625 499 L625 494.5 L628 494.5 M627.5 497 L631 497 L631 493" fill="none" stroke="#b8b8b8" stroke-width="0.8"/>
<path d="M634 499 L640.5 493.5 L640.5 499 Z" fill="#3030a0"/><path d="M634 499 L640 499" stroke="#c02020" stroke-width="1"/>
<rect x="643" y="493" width="6.5" height="6.5" fill="none"/><path d="M643 493 L649.5 499.5 M649.5 493 L643 499.5" stroke="#2a2a8a" stroke-width="1.4"/><rect x="645" y="495" width="2.5" height="2.5" fill="#c02020"/>
<path d="M592 510 L595 510 M592 510 L592 513.5" stroke="#555" stroke-width="0.7"/><path d="M593 515 L595.5 517" stroke="#777" stroke-width="0.6"/>
<path d="M642 510 L645 510 M642 510 L642 513.5" stroke="#555" stroke-width="0.7"/><path d="M643 515 L645.5 517" stroke="#777" stroke-width="0.6"/>
<path d="M693 510 L696 510 M693 510 L693 513.5" stroke="#555" stroke-width="0.7"/><path d="M694 515 L696.5 517" stroke="#777" stroke-width="0.6"/>
<circle cx="17.3" cy="479.8" r="2.4" fill="#222"/><circle cx="17.3" cy="479.8" r="0.9" fill="#fff"/>
<path d="M48 482.5 L48 477 L51.5 477 L53 478.5 L53 482.5 Z" fill="#f4f4f4" stroke="#666" stroke-width="0.7"/><path d="M49 481.5 L50.5 479 L52 481.5 Z" fill="#777"/>
</svg>
<div class="b" style="left:0px;top:505.5px;width:800px;height:12.5px;background:#f0f0f0;border-top:1px solid #d8d8d8;"></div>
<div class="b" style="left:0px;top:517.5px;width:800px;height:1px;background:#9a9a9a;"></div>
<div class="b" style="left:25px;top:517.5px;width:180px;height:1px;background:#d0d0d0;"></div>
<div class="b" style="left:0px;top:517.3px;width:25px;height:1.2px;background:#444;"></div>
<div class="t" style="left:4px;top:508.86px;font-size:6.89px;transform:scaleX(0.885);transform-origin:0 0;color:#111;font-weight:normal;">Wählen Sie ein oder mehrere Objekte aus</div>
<div class="t" style="left:551.4px;top:508.86px;font-size:6.89px;transform:scaleX(0.885);transform-origin:0 0;color:#111;font-weight:normal;">FANG&nbsp;&nbsp;GEO</div>
<div class="b" style="left:597.5px;top:509px;width:40px;height:9px;background:#fff;border:1px solid #222;overflow:hidden;"></div>
<div class="b" style="left:598.5px;top:509.5px;width:38px;height:8px;overflow:hidden;"><div class="t" style="left:1px;top:-0.6px;font-size:7.3px;transform:scaleX(0.885);transform-origin:0 0;color:#111;">-88980,98 mm</div></div>
<div class="t" style="left:592px;top:507.11px;font-size:5.65px;transform:scaleX(0.885);transform-origin:0 0;color:#555;font-weight:normal;">ˣ</div>
<div class="b" style="left:647px;top:509px;width:41px;height:9px;background:#fff;border:1px solid #222;overflow:hidden;"></div>
<div class="b" style="left:648px;top:509.5px;width:39px;height:8px;overflow:hidden;"><div class="t" style="left:1px;top:-0.6px;font-size:7.3px;transform:scaleX(0.885);transform-origin:0 0;color:#111;">145654,58 mm</div></div>
<div class="t" style="left:642px;top:507.11px;font-size:5.65px;transform:scaleX(0.885);transform-origin:0 0;color:#555;font-weight:normal;">ˣ</div>
<div class="b" style="left:697.6px;top:509px;width:40px;height:9px;background:#fff;border:1px solid #222;overflow:hidden;"></div>
<div class="b" style="left:698.6px;top:509.5px;width:38px;height:8px;overflow:hidden;"><div class="t" style="left:1px;top:-0.6px;font-size:7.3px;transform:scaleX(0.885);transform-origin:0 0;color:#111;">-1725,82 mm</div></div>
<div class="t" style="left:693px;top:507.11px;font-size:5.65px;transform:scaleX(0.885);transform-origin:0 0;color:#555;font-weight:normal;">ˣ</div>
<div class="t" style="left:742px;top:508.86px;font-size:6.89px;transform:scaleX(0.885);transform-origin:0 0;color:#111;font-weight:normal;">&lt;1%</div>
<div class="t" style="left:770.7px;top:508.86px;font-size:6.89px;transform:scaleX(0.885);transform-origin:0 0;color:#111;font-weight:normal;">11:03</div>
</div></body></html>
